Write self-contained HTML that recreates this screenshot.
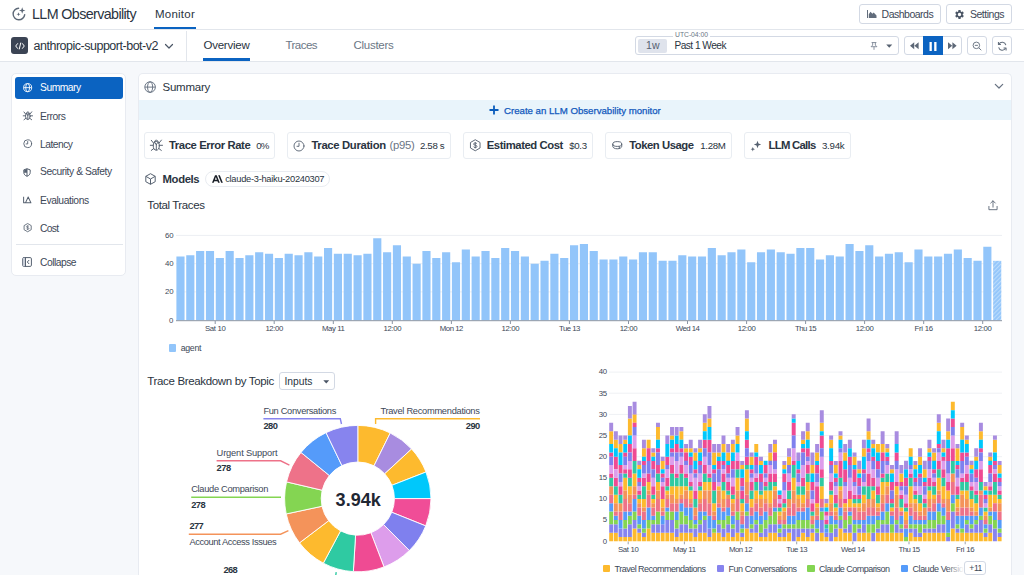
<!DOCTYPE html>
<html><head><meta charset="utf-8"><title>LLM Observability</title>
<style>
html,body{margin:0;padding:0;overflow:hidden;}
html{width:1024px;height:575px;}
body{width:1024px;height:575px;overflow:hidden;background:#f6f8fb;font-family:"Liberation Sans",sans-serif;position:relative;}
.t{position:absolute;white-space:nowrap;}
.b{position:absolute;}
svg{display:block;overflow:visible;}
#root{position:absolute;left:0;top:0;width:1024px;height:575px;overflow:hidden;}
</style></head><body><div id="root">
<div class="b" style="left:0.00px;top:0.00px;width:1024.00px;height:29.00px;background:#fff;border-bottom:1px solid #e2e6ec;"></div>
<div class="b" style="left:0.00px;top:30.00px;width:1024.00px;height:31.00px;background:#fff;border-bottom:1px solid #e2e6ec;"></div>
<svg class="b" style="left:11px;top:6px" width="16" height="16" viewBox="0 0 16 16" fill="none" stroke="#5d6877" stroke-width="1.4" stroke-linecap="round"><path d="M7.600 2.200A5.800 5.800 0 1 0 13.700 8.600"/><path d="M11.200 1.300l.85 2.350 2.350.85-2.350.85-.85 2.350-.85-2.350-2.350-.85 2.350-.85z" fill="#5d6877" stroke="none"/><path d="M7.500 6.200l.55 1.450 1.450.55-1.450.55-.55 1.450-.55-1.450-1.450-.55 1.450-.55z" fill="#5d6877" stroke="none"/></svg>
<div class="t" style="left:32.00px;top:4.00px;font-size:14.3px;line-height:20px;color:#2a3441;letter-spacing:-0.614px;">LLM Observability</div>
<div class="t" style="left:155.00px;top:6.00px;font-size:11.5px;line-height:16px;color:#2a3441;letter-spacing:0.236px;">Monitor</div>
<div class="b" style="left:154.00px;top:26.50px;width:41.50px;height:2.70px;background:#0b63c1;"></div>
<div class="b" style="left:859.00px;top:4.00px;width:82.00px;height:20.00px;border:1px solid #d3d9e4;border-radius:3px;background:#fff;box-sizing:border-box;"></div>
<svg class="b" style="left:866.800px;top:10.300px" width="10" height="8" viewBox="0 0 10 8"><path d="M0.500 0v8" fill="none" stroke="#626d7c" stroke-width="1"/><path d="M1.800 8V4.200l1.700-2.400 1.900 2 1.300-1.300 2.800 2.900V8z" fill="#626d7c"/></svg>
<div class="t" style="left:881.60px;top:6.80px;font-size:10.5px;line-height:15px;color:#3d4858;letter-spacing:-0.502px;">Dashboards</div>
<div class="b" style="left:946.00px;top:4.00px;width:66.00px;height:20.00px;border:1px solid #d3d9e4;border-radius:3px;background:#fff;box-sizing:border-box;"></div>
<svg class="b" style="left:954px;top:8.5px" width="11" height="11" viewBox="0 0 24 24"><path fill="#4a5565" d="M19.14 12.94c.04-.3.06-.61.06-.94 0-.32-.02-.64-.07-.94l2.03-1.58a.49.49 0 0 0 .12-.61l-1.92-3.32a.488.488 0 0 0-.59-.22l-2.39.96c-.5-.38-1.03-.7-1.62-.94l-.36-2.54a.484.484 0 0 0-.48-.41h-3.84c-.24 0-.43.17-.47.41l-.36 2.54c-.59.24-1.13.57-1.62.94l-2.39-.96c-.22-.08-.47 0-.59.22L2.74 8.87c-.12.21-.08.47.12.61l2.03 1.58c-.05.3-.09.63-.09.94s.02.64.07.94l-2.03 1.58a.49.49 0 0 0-.12.61l1.92 3.32c.12.22.37.29.59.22l2.39-.96c.5.38 1.03.7 1.62.94l.36 2.54c.05.24.24.41.48.41h3.84c.24 0 .44-.17.47-.41l.36-2.54c.59-.24 1.13-.56 1.62-.94l2.39.96c.22.08.47 0 .59-.22l1.92-3.32c.12-.22.07-.47-.12-.61l-2.01-1.58zM12 15.6c-1.98 0-3.600-1.62-3.600-3.600s1.62-3.600 3.600-3.600 3.600 1.62 3.600 3.600-1.62 3.600-3.600 3.600z"/></svg>
<div class="t" style="left:970.00px;top:6.80px;font-size:10.5px;line-height:15px;color:#3d4858;letter-spacing:-0.492px;">Settings</div>
<div class="b" style="left:11.00px;top:37.00px;width:17.00px;height:17.00px;background:#3b4454;border-radius:3px;"></div>
<svg class="b" style="left:14.5px;top:41.5px" width="10" height="8" viewBox="0 0 10 8" fill="none" stroke="#fff" stroke-width="1" stroke-linecap="round" stroke-linejoin="round"><path d="M2.6 1.6L.7 4l1.900 2.400M7.400 1.600L9.300 4 7.400 6.400M5.700 1L4.300 7"/></svg>
<div class="t" style="left:33.50px;top:36.50px;font-size:12.5px;line-height:18px;color:#2a3441;letter-spacing:-0.487px;">anthropic-support-bot-v2</div>
<svg class="b" style="left:164px;top:42.5px" width="10" height="7" viewBox="0 0 10 7" fill="none" stroke="#4a5565" stroke-width="1.2" stroke-linecap="round" stroke-linejoin="round"><path d="M1.500 1.500L5 5l3.500-3.500"/></svg>
<div class="b" style="left:186.00px;top:31.00px;width:1.00px;height:30.00px;background:#e2e6ec;"></div>
<div class="t" style="left:203.50px;top:37.00px;font-size:11.5px;line-height:16px;color:#2a3441;letter-spacing:-0.241px;">Overview</div>
<div class="b" style="left:202.50px;top:57.50px;width:47.50px;height:3.00px;background:#0b63c1;"></div>
<div class="t" style="left:285.50px;top:36.90px;font-size:11.5px;line-height:16px;color:#6b7685;letter-spacing:-0.537px;">Traces</div>
<div class="t" style="left:353.50px;top:36.90px;font-size:11.5px;line-height:16px;color:#6b7685;letter-spacing:-0.272px;">Clusters</div>
<div class="b" style="left:635.00px;top:35.60px;width:264.00px;height:19.60px;border:1px solid #d3d9e4;border-radius:3px;background:#fff;box-sizing:border-box;"></div>
<div class="b" style="left:638.00px;top:38.50px;width:29.00px;height:14.00px;background:#dfe3ec;border-radius:2px;"></div>
<div class="t" style="left:646.00px;top:38.20px;font-size:10.5px;line-height:15px;color:#566070;letter-spacing:0.039px;">1w</div>
<div class="t" style="left:674.50px;top:38.60px;font-size:10.1px;line-height:14px;color:#2a3441;letter-spacing:-0.507px;">Past 1 Week</div>
<div class="b" style="left:673.00px;top:31.00px;width:37.00px;height:7.00px;background:#fff;"></div>
<div class="t" style="left:675.00px;top:29.70px;font-size:6.8px;line-height:10px;color:#6b7685;letter-spacing:-0.029px;">UTC-04:00</div>
<svg class="b" style="left:869.600px;top:42px" width="8" height="8" viewBox="0 0 9 9" fill="none" stroke="#7a8494" stroke-width="1"><path d="M1.800 .6h5.400M3 .6v2.900L1.200 5.300h6.600L6 3.500V.6M4.500 5.300V8.800"/></svg>
<svg class="b" style="left:886.300px;top:44.300px" width="6.500" height="4.200" viewBox="0 0 8 5"><path d="M.3.500h7.400L4 4.500z" fill="#566170"/></svg>
<div class="b" style="left:904.00px;top:35.60px;width:57.50px;height:19.60px;border:1px solid #d3d9e4;border-radius:3px;background:#fff;box-sizing:border-box;"></div>
<div class="b" style="left:923.00px;top:35.60px;width:19.50px;height:19.60px;background:#0b63c1;"></div>
<svg class="b" style="left:909.700px;top:42.300px" width="8.800" height="7.400" viewBox="0 0 10 8"><path d="M4.800 0v8L0 4zM9.800 0v8L5 4z" fill="#5d6877"/></svg>
<svg class="b" style="left:929px;top:41.500px" width="8" height="9" viewBox="0 0 8 9"><path d="M0.500 0h2.300v9H.5zM5.200 0h2.300v9H5.200z" fill="#fff"/></svg>
<svg class="b" style="left:947.900px;top:42.300px" width="8.800" height="7.400" viewBox="0 0 10 8"><path d="M0 0v8l4.800-4zM5 0v8l4.800-4z" fill="#5d6877"/></svg>
<div class="b" style="left:967.00px;top:35.60px;width:19.50px;height:19.60px;border:1px solid #d3d9e4;border-radius:3px;background:#fff;box-sizing:border-box;"></div>
<svg class="b" style="left:972.200px;top:40.900px" width="10" height="10" viewBox="0 0 11 11" fill="none" stroke="#626d7c" stroke-width="1"><circle cx="4.800" cy="4.800" r="3.600"/><path d="M3.100 4.800h3.400M7.500 7.500l2.700 2.700"/></svg>
<div class="b" style="left:992.00px;top:35.60px;width:20.00px;height:19.60px;border:1px solid #d3d9e4;border-radius:3px;background:#fff;box-sizing:border-box;"></div>
<svg class="b" style="left:996.800px;top:40.500px" width="10.500" height="10.500" viewBox="0 0 11 11" fill="none" stroke="#626d7c" stroke-width="1.100" stroke-linejoin="round"><path d="M9.300 4.300A4 4 0 0 0 2 3.300M1.700 6.700A4 4 0 0 0 9 7.700"/><path d="M1.500 1v2.600h2.600M9.500 10V7.400H6.900"/></svg>
<div class="b" style="left:11.00px;top:73.00px;width:115.00px;height:203.00px;background:#fff;border:1px solid #e8ebf1;border-radius:5px;box-sizing:border-box;"></div>
<div class="b" style="left:15.00px;top:76.50px;width:108.00px;height:22.00px;background:#0b63c1;border-radius:3px;"></div>
<svg class="b" style="left:22.75px;top:82.65px" width="9.3" height="9.3" viewBox="0 0 12 12" fill="none" stroke="#fff" stroke-width="1.15"><circle cx="6" cy="6" r="5.200"/><ellipse cx="6" cy="6" rx="2.500" ry="5.200"/><path d="M.8 6h10.400"/></svg>
<div class="t" style="left:40.00px;top:81.30px;font-size:10.3px;line-height:14px;color:#fff;letter-spacing:-0.481px;">Summary</div>
<svg class="b" style="left:22.50px;top:111.00px" width="9.80" height="9.05" viewBox="0 0 13 12" fill="none" stroke="#566170" stroke-width="1.25" stroke-linecap="round" stroke-linejoin="round"><ellipse cx="6.400" cy="6.900" rx="3.100" ry="4.400"/><path d="M4.300 3.400C4.300 .4 8.500 .4 8.500 3.400M6.400 5.600v5.600M6.400 5.600L4.900 3.500M6.400 5.600l1.500-2.100M3.700 4.300L1.300 1.300M9.100 4.300l2.500-3.200M3.300 6.400H.3M9.500 6.400h3.200M3.800 9.700l-2.500 1.900M9 9.700l2.500 1.900"/></svg>
<div class="t" style="left:40.00px;top:109.50px;font-size:10.3px;line-height:14px;color:#3d4858;letter-spacing:-0.406px;">Errors</div>
<svg class="b" style="left:22.7px;top:138.7px" width="9.4" height="9.4" viewBox="0 0 12 12" fill="none" stroke="#566170" stroke-width="1.15" stroke-linecap="round"><circle cx="6" cy="6" r="5"/><path d="M6 3.200V6.300H4"/></svg>
<div class="t" style="left:40.00px;top:137.50px;font-size:10.3px;line-height:14px;color:#3d4858;letter-spacing:-0.511px;">Latency</div>
<svg class="b" style="left:23.200px;top:167.600px" width="8" height="9" viewBox="0 0 10 11" fill="none" stroke="#566170" stroke-width="1.250" stroke-linejoin="round"><path d="M5 .8L1 2.200v3.300c0 2.300 1.700 3.900 4 4.700 2.300-.8 4-2.400 4-4.700V2.200z"/><path d="M5 .8v9.400M1 5.200h4" /><path d="M5 1.200L1.500 2.500V5H5z" fill="#566170" stroke="none"/></svg>
<div class="t" style="left:40.00px;top:165.30px;font-size:10.3px;line-height:14px;color:#3d4858;letter-spacing:-0.429px;">Security &amp; Safety</div>
<svg class="b" style="left:23.200px;top:195.800px" width="8.800" height="7.400" viewBox="0 0 10 8.400" fill="none" stroke="#566170" stroke-width="1.150" stroke-linejoin="round"><path d="M.7 .8v6.900h8.800M2.900 7.500L5.900 1.200l3 6.300"/></svg>
<div class="t" style="left:40.00px;top:193.50px;font-size:10.3px;line-height:14px;color:#3d4858;letter-spacing:-0.414px;">Evaluations</div>
<svg class="b" style="left:22.9px;top:223.2px" width="9.3" height="9.3" viewBox="0 0 12 12" fill="none" stroke="#566170" stroke-width="1.1" stroke-linejoin="round"><path d="M6 .7l4.600 2.650v5.300L6 11.300 1.400 8.650v-5.300z"/><path d="M7.600 4.600c-.3-.6-.9-.8-1.600-.8-.9 0-1.600.4-1.600 1.100 0 1.500 3.300.6 3.300 2.200 0 .7-.7 1.100-1.700 1.100-.8 0-1.500-.3-1.700-.9M6 3v6" stroke-width="0.9"/></svg>
<div class="t" style="left:40.00px;top:221.60px;font-size:10.3px;line-height:14px;color:#3d4858;letter-spacing:-0.670px;">Cost</div>
<div class="b" style="left:16.00px;top:244.00px;width:106.50px;height:1.00px;background:#e2e6ec;"></div>
<svg class="b" style="left:22.300px;top:256.600px" width="10" height="10" viewBox="0 0 10 10" fill="none" stroke="#566170" stroke-width="1" stroke-linejoin="round" stroke-linecap="round"><rect x=".6" y=".6" width="8.800" height="8.800" rx="1.200"/><path d="M.8.800h2.700v8.400H.8z" fill="#c9ced8" stroke="none"/><path d="M3.500 .6v8.800M6.900 3.300L5.300 5l1.600 1.700"/></svg>
<div class="t" style="left:40.00px;top:255.70px;font-size:10.3px;line-height:14px;color:#3d4858;letter-spacing:-0.510px;">Collapse</div>
<div class="b" style="left:138.00px;top:73.00px;width:874.00px;height:502.00px;background:#fff;border:1px solid #e8ebf1;border-bottom:none;border-radius:5px 5px 0 0;box-sizing:border-box;"></div>
<svg class="b" style="left:144.00px;top:80.80px" width="12.2" height="12.2" viewBox="0 0 12 12" fill="none" stroke="#677282" stroke-width="0.95"><circle cx="6" cy="6" r="5.200"/><ellipse cx="6" cy="6" rx="2.500" ry="5.200"/><path d="M.8 6h10.400"/></svg>
<div class="t" style="left:162.50px;top:79.00px;font-size:11.5px;line-height:16px;color:#2a3441;letter-spacing:-0.243px;">Summary</div>
<svg class="b" style="left:994px;top:83px" width="10" height="7" viewBox="0 0 10 7" fill="none" stroke="#677282" stroke-width="1.200" stroke-linecap="round" stroke-linejoin="round"><path d="M1.300 1.300L5 5l3.700-3.700"/></svg>
<div class="b" style="left:139.00px;top:100.30px;width:872.00px;height:19.90px;background:#e9f4fb;"></div>
<svg class="b" style="left:489.3px;top:105.3px" width="10" height="10" viewBox="0 0 10 10"><path d="M5 .5v9M.5 5h9" stroke="#0b5cbc" stroke-width="1.800" fill="none"/></svg>
<div class="t" style="left:504.00px;top:103.90px;font-size:9.7px;line-height:14px;color:#1259bd;letter-spacing:-0.027px;-webkit-text-stroke:0.25px #1259bd;">Create an LLM Observability monitor</div>
<div class="b" style="left:144.00px;top:132.00px;width:131.00px;height:26.50px;border:1px solid #e9edf2;border-radius:3px;background:#fff;box-sizing:border-box;"></div>
<svg class="b" style="left:150.10px;top:139.10px" width="12.80" height="11.82" viewBox="0 0 13 12" fill="none" stroke="#566170" stroke-width="1.0" stroke-linecap="round" stroke-linejoin="round"><ellipse cx="6.400" cy="6.900" rx="3.100" ry="4.400"/><path d="M4.300 3.400C4.300 .4 8.500 .4 8.500 3.400M6.400 5.600v5.600M6.400 5.600L4.900 3.500M6.400 5.600l1.500-2.100M3.700 4.300L1.300 1.300M9.100 4.300l2.500-3.200M3.300 6.400H.3M9.500 6.400h3.200M3.800 9.700l-2.500 1.900M9 9.700l2.500 1.900"/></svg>
<div class="t" style="left:169.00px;top:137.00px;font-size:11.3px;line-height:16px;color:#2a3441;font-weight:700;letter-spacing:-0.415px;">Trace Error Rate</div>
<div class="t" style="left:256.30px;top:138.50px;font-size:9.7px;line-height:14px;color:#2a3441;letter-spacing:-0.910px;">0%</div>
<div class="b" style="left:286.50px;top:132.00px;width:164.00px;height:26.50px;border:1px solid #e9edf2;border-radius:3px;background:#fff;box-sizing:border-box;"></div>
<svg class="b" style="left:293.0px;top:139.5px" width="12" height="12" viewBox="0 0 12 12" fill="none" stroke="#566170" stroke-width="0.9" stroke-linecap="round"><circle cx="6" cy="6" r="5"/><path d="M6 3.200V6.300H4"/></svg>
<div class="t" style="left:311.40px;top:137.00px;font-size:11.3px;line-height:16px;color:#2a3441;font-weight:700;letter-spacing:-0.337px;">Trace Duration</div>
<div class="t" style="left:389.50px;top:137.20px;font-size:11.3px;line-height:16px;color:#6b7685;letter-spacing:-0.276px;">(p95)</div>
<div class="t" style="left:420.00px;top:138.50px;font-size:9.7px;line-height:14px;color:#2a3441;letter-spacing:-0.354px;">2.58 s</div>
<div class="b" style="left:462.50px;top:132.00px;width:130.50px;height:26.50px;border:1px solid #e9edf2;border-radius:3px;background:#fff;box-sizing:border-box;"></div>
<svg class="b" style="left:468.5px;top:139.3px" width="12.5" height="12.5" viewBox="0 0 12 12" fill="none" stroke="#566170" stroke-width="0.9" stroke-linejoin="round"><path d="M6 .7l4.600 2.650v5.300L6 11.300 1.400 8.650v-5.300z"/><path d="M7.600 4.600c-.3-.6-.9-.8-1.600-.8-.9 0-1.600.4-1.600 1.100 0 1.500 3.300.6 3.300 2.200 0 .7-.7 1.100-1.700 1.100-.8 0-1.500-.3-1.700-.9M6 3v6" stroke-width="0.9"/></svg>
<div class="t" style="left:486.70px;top:137.00px;font-size:11.3px;line-height:16px;color:#2a3441;font-weight:700;letter-spacing:-0.433px;">Estimated Cost</div>
<div class="t" style="left:569.30px;top:138.50px;font-size:9.7px;line-height:14px;color:#2a3441;letter-spacing:-0.370px;">$0.3</div>
<div class="b" style="left:604.50px;top:132.00px;width:127.50px;height:26.50px;border:1px solid #e9edf2;border-radius:3px;background:#fff;box-sizing:border-box;"></div>
<svg class="b" style="left:612.200px;top:141.200px" width="10.500" height="8.500" viewBox="0 0 10.500 8.500" fill="none" stroke="#566170" stroke-width="0.950"><ellipse cx="5.250" cy="3" rx="4.500" ry="2.400"/><path d="M.75 3v2.300c0 1.400 2 2.500 4.500 2.500s4.500-1.100 4.500-2.500V3M7.300 5.200v2.200"/></svg>
<div class="t" style="left:629.20px;top:137.00px;font-size:11.3px;line-height:16px;color:#2a3441;font-weight:700;letter-spacing:-0.463px;">Token Usage</div>
<div class="t" style="left:700.30px;top:138.50px;font-size:9.7px;line-height:14px;color:#2a3441;letter-spacing:-0.332px;">1.28M</div>
<div class="b" style="left:743.50px;top:132.00px;width:107.50px;height:26.50px;border:1px solid #e9edf2;border-radius:3px;background:#fff;box-sizing:border-box;"></div>
<svg class="b" style="left:750px;top:139.500px" width="12" height="12" viewBox="0 0 12 12" fill="#566170"><path d="M7.500 .8l1 2.700 2.700 1-2.700 1-1 2.700-1-2.700-2.700-1 2.700-1z"/><path d="M2.800 7l.6 1.600 1.600.6-1.600.6-.6 1.600-.6-1.600-1.600-.6 1.600-.6z"/></svg>
<div class="t" style="left:768.60px;top:137.00px;font-size:11.3px;line-height:16px;color:#2a3441;font-weight:700;letter-spacing:-0.718px;">LLM Calls</div>
<div class="t" style="left:821.90px;top:138.50px;font-size:9.7px;line-height:14px;color:#2a3441;letter-spacing:-0.226px;">3.94k</div>
<svg class="b" style="left:144.500px;top:172.500px" width="11" height="12" viewBox="0 0 11 12" fill="none" stroke="#566170" stroke-width="1" stroke-linejoin="round"><path d="M5.500 .7l4.700 2.600v5.400L5.500 11.300.8 8.700V3.300z"/><path d="M.8 3.300l4.700 2.700 4.700-2.700M5.500 6v5.300"/></svg>
<div class="t" style="left:162.60px;top:170.60px;font-size:11.3px;line-height:16px;color:#2a3441;font-weight:700;letter-spacing:-0.388px;">Models</div>
<div class="b" style="left:205.00px;top:170.50px;width:125.00px;height:16.00px;border:1px solid #e9ecf1;border-radius:8px;background:#fff;box-sizing:border-box;"></div>
<svg class="b" style="left:211.500px;top:174.500px" width="11" height="8" viewBox="0 0 46 32"><path fill="#1a1f27" d="M32.730 0h-6.945L38.450 32h6.945L32.730 0ZM12.665 0 0 32h7.082l2.590-6.720h13.250l2.590 6.720h7.082L19.929 0h-7.264Zm-.702 19.337 4.334-11.246 4.334 11.246h-8.668Z"/></svg>
<div class="t" style="left:225.20px;top:172.50px;font-size:9.3px;line-height:13px;color:#2a3441;letter-spacing:-0.277px;">claude-3-haiku-20240307</div>
<div class="t" style="left:147.30px;top:197.10px;font-size:11.5px;line-height:16px;color:#2a3441;letter-spacing:-0.400px;">Total Traces</div>
<svg class="b" style="left:988px;top:200.200px" width="10" height="11" viewBox="0 0 11 12" fill="none" stroke="#5d6877" stroke-width="1" stroke-linecap="round" stroke-linejoin="round"><path d="M5.500 7.800V1M3 3.300L5.500.8 8 3.300M1 7v3.600h9V7"/></svg>
<svg class="b" style="left:0;top:0" width="1024" height="575" viewBox="0 0 1024 575"><defs><pattern id="hat" width="3" height="3" patternUnits="userSpaceOnUse" patternTransform="rotate(45)"><rect width="3" height="3" fill="#92c5fa"/><rect width="1.2" height="3" fill="#b9dbfc"/></pattern></defs><path d="M176 235.4H1002" stroke="#eceff3" stroke-width="1"/><path d="M176 263.7H1002" stroke="#eceff3" stroke-width="1"/><path d="M176 291.9H1002" stroke="#eceff3" stroke-width="1"/><path d="M176.40 320.20h8.15v-63.60h-8.15zM186.24 320.20h8.15v-65.01h-8.15zM196.08 320.20h8.15v-69.25h-8.15zM205.92 320.20h8.15v-69.25h-8.15zM215.76 320.20h8.15v-62.19h-8.15zM225.60 320.20h8.15v-69.25h-8.15zM235.44 320.20h8.15v-62.19h-8.15zM245.28 320.20h8.15v-65.01h-8.15zM255.12 320.20h8.15v-67.84h-8.15zM264.96 320.20h8.15v-66.43h-8.15zM274.80 320.20h8.15v-62.19h-8.15zM284.64 320.20h8.15v-66.43h-8.15zM294.48 320.20h8.15v-65.01h-8.15zM304.32 320.20h8.15v-67.84h-8.15zM314.16 320.20h8.15v-63.60h-8.15zM324.00 320.20h8.15v-72.08h-8.15zM333.84 320.20h8.15v-66.43h-8.15zM343.68 320.20h8.15v-66.43h-8.15zM353.52 320.20h8.15v-65.01h-8.15zM363.36 320.20h8.15v-66.43h-8.15zM373.20 320.20h8.15v-81.97h-8.15zM383.04 320.20h8.15v-67.84h-8.15zM392.88 320.20h8.15v-74.91h-8.15zM402.72 320.20h8.15v-63.60h-8.15zM412.56 320.20h8.15v-56.53h-8.15zM422.40 320.20h8.15v-69.25h-8.15zM432.24 320.20h8.15v-62.19h-8.15zM442.08 320.20h8.15v-67.84h-8.15zM451.92 320.20h8.15v-57.95h-8.15zM461.76 320.20h8.15v-70.67h-8.15zM471.60 320.20h8.15v-63.60h-8.15zM481.44 320.20h8.15v-69.25h-8.15zM491.28 320.20h8.15v-62.19h-8.15zM501.12 320.20h8.15v-72.08h-8.15zM510.96 320.20h8.15v-69.25h-8.15zM520.80 320.20h8.15v-63.60h-8.15zM530.64 320.20h8.15v-56.53h-8.15zM540.48 320.20h8.15v-59.36h-8.15zM550.32 320.20h8.15v-66.43h-8.15zM560.16 320.20h8.15v-62.19h-8.15zM570.00 320.20h8.15v-74.91h-8.15zM579.84 320.20h8.15v-76.32h-8.15zM589.68 320.20h8.15v-69.25h-8.15zM599.52 320.20h8.15v-60.77h-8.15zM609.36 320.20h8.15v-60.77h-8.15zM619.20 320.20h8.15v-63.60h-8.15zM629.04 320.20h8.15v-60.77h-8.15zM638.88 320.20h8.15v-67.84h-8.15zM648.72 320.20h8.15v-67.84h-8.15zM658.56 320.20h8.15v-59.36h-8.15zM668.40 320.20h8.15v-59.36h-8.15zM678.24 320.20h8.15v-65.01h-8.15zM688.08 320.20h8.15v-63.60h-8.15zM697.92 320.20h8.15v-63.60h-8.15zM707.76 320.20h8.15v-72.08h-8.15zM717.60 320.20h8.15v-65.01h-8.15zM727.44 320.20h8.15v-67.84h-8.15zM737.28 320.20h8.15v-70.67h-8.15zM747.12 320.20h8.15v-57.95h-8.15zM756.96 320.20h8.15v-67.84h-8.15zM766.80 320.20h8.15v-70.67h-8.15zM776.64 320.20h8.15v-67.84h-8.15zM786.48 320.20h8.15v-66.43h-8.15zM796.32 320.20h8.15v-72.08h-8.15zM806.16 320.20h8.15v-72.08h-8.15zM816.00 320.20h8.15v-60.77h-8.15zM825.84 320.20h8.15v-65.01h-8.15zM835.68 320.20h8.15v-63.60h-8.15zM845.52 320.20h8.15v-76.32h-8.15zM855.36 320.20h8.15v-69.25h-8.15zM865.20 320.20h8.15v-74.91h-8.15zM875.04 320.20h8.15v-63.60h-8.15zM884.88 320.20h8.15v-66.43h-8.15zM894.72 320.20h8.15v-67.84h-8.15zM904.56 320.20h8.15v-57.95h-8.15zM914.40 320.20h8.15v-70.67h-8.15zM924.24 320.20h8.15v-63.60h-8.15zM934.08 320.20h8.15v-63.60h-8.15zM943.92 320.20h8.15v-66.43h-8.15zM953.76 320.20h8.15v-70.67h-8.15zM963.60 320.20h8.15v-62.19h-8.15zM973.44 320.20h8.15v-59.36h-8.15zM983.28 320.20h8.15v-73.49h-8.15z" fill="#92c5fa"/><rect x="993.12" y="260.84" width="8.15" height="59.36" fill="url(#hat)"/><path d="M176 320.700H1002" stroke="#8a94a3" stroke-width="1"/><path d="M215.2 321v3" stroke="#8a94a3" stroke-width="1"/><path d="M274.2 321v3" stroke="#8a94a3" stroke-width="1"/><path d="M333.3 321v3" stroke="#8a94a3" stroke-width="1"/><path d="M392.3 321v3" stroke="#8a94a3" stroke-width="1"/><path d="M451.4 321v3" stroke="#8a94a3" stroke-width="1"/><path d="M510.4 321v3" stroke="#8a94a3" stroke-width="1"/><path d="M569.4 321v3" stroke="#8a94a3" stroke-width="1"/><path d="M628.5 321v3" stroke="#8a94a3" stroke-width="1"/><path d="M687.5 321v3" stroke="#8a94a3" stroke-width="1"/><path d="M746.6 321v3" stroke="#8a94a3" stroke-width="1"/><path d="M805.6 321v3" stroke="#8a94a3" stroke-width="1"/><path d="M864.6 321v3" stroke="#8a94a3" stroke-width="1"/><path d="M923.7 321v3" stroke="#8a94a3" stroke-width="1"/><path d="M982.7 321v3" stroke="#8a94a3" stroke-width="1"/></svg>
<div class="t" style="left:205.05px;top:323.10px;font-size:7.8px;line-height:11px;color:#3d4858;letter-spacing:-0.375px;">Sat 10</div>
<div class="t" style="left:265.39px;top:323.10px;font-size:7.8px;line-height:11px;color:#3d4858;letter-spacing:-0.364px;">12:00</div>
<div class="t" style="left:322.03px;top:323.10px;font-size:7.8px;line-height:11px;color:#3d4858;letter-spacing:-0.417px;">May 11</div>
<div class="t" style="left:383.47px;top:323.10px;font-size:7.8px;line-height:11px;color:#3d4858;letter-spacing:-0.364px;">12:00</div>
<div class="t" style="left:439.76px;top:323.10px;font-size:7.8px;line-height:11px;color:#3d4858;letter-spacing:-0.470px;">Mon 12</div>
<div class="t" style="left:501.55px;top:323.10px;font-size:7.8px;line-height:11px;color:#3d4858;letter-spacing:-0.364px;">12:00</div>
<div class="t" style="left:559.04px;top:323.10px;font-size:7.8px;line-height:11px;color:#3d4858;letter-spacing:-0.533px;">Tue 13</div>
<div class="t" style="left:619.63px;top:323.10px;font-size:7.8px;line-height:11px;color:#3d4858;letter-spacing:-0.364px;">12:00</div>
<div class="t" style="left:675.77px;top:323.10px;font-size:7.8px;line-height:11px;color:#3d4858;letter-spacing:-0.540px;">Wed 14</div>
<div class="t" style="left:737.71px;top:323.10px;font-size:7.8px;line-height:11px;color:#3d4858;letter-spacing:-0.364px;">12:00</div>
<div class="t" style="left:795.00px;top:323.10px;font-size:7.8px;line-height:11px;color:#3d4858;letter-spacing:-0.514px;">Thu 15</div>
<div class="t" style="left:855.79px;top:323.10px;font-size:7.8px;line-height:11px;color:#3d4858;letter-spacing:-0.364px;">12:00</div>
<div class="t" style="left:914.53px;top:323.10px;font-size:7.8px;line-height:11px;color:#3d4858;letter-spacing:-0.273px;">Fri 16</div>
<div class="t" style="left:973.87px;top:323.10px;font-size:7.8px;line-height:11px;color:#3d4858;letter-spacing:-0.364px;">12:00</div>
<div class="t" style="left:165.00px;top:229.70px;font-size:7.8px;line-height:11px;color:#3d4858;letter-spacing:-0.188px;">60</div>
<div class="t" style="left:165.00px;top:258.00px;font-size:7.8px;line-height:11px;color:#3d4858;letter-spacing:-0.188px;">40</div>
<div class="t" style="left:165.00px;top:286.20px;font-size:7.8px;line-height:11px;color:#3d4858;letter-spacing:-0.188px;">20</div>
<div class="t" style="left:169.10px;top:314.50px;font-size:7.8px;line-height:11px;color:#3d4858;letter-spacing:-0.138px;">0</div>
<div class="b" style="left:168.60px;top:344.00px;width:7.60px;height:7.60px;background:#92c5fa;border-radius:1px;"></div>
<div class="t" style="left:180.70px;top:341.60px;font-size:8.8px;line-height:12px;color:#3d4858;letter-spacing:-0.305px;">agent</div>
<div class="t" style="left:147.30px;top:373.00px;font-size:11.5px;line-height:16px;color:#2a3441;letter-spacing:-0.341px;">Trace Breakdown by Topic</div>
<div class="b" style="left:279.00px;top:371.60px;width:56.00px;height:18.90px;border:1px solid #d3d9e4;border-radius:3px;background:#fff;box-sizing:border-box;"></div>
<div class="t" style="left:284.50px;top:374.80px;font-size:10.3px;line-height:14px;color:#2a3441;letter-spacing:-0.010px;">Inputs</div>
<svg class="b" style="left:322.800px;top:380px" width="6.500" height="4.100" viewBox="0 0 8 5"><path d="M.4.400h7.200L4 4.400z" fill="#4a5565"/></svg>
<svg class="b" style="left:0;top:0" width="1024" height="575" viewBox="0 0 1024 575"><path d="M357.80 425.40A73.20 73.20 0 0 1 390.23 432.98L374.02 465.79A36.60 36.60 0 0 0 357.80 462.00Z" fill="#fdba2e" stroke="#fff" stroke-width="0.9"/><path d="M390.23 432.98A73.20 73.20 0 0 1 411.60 448.96L384.70 473.78A36.60 36.60 0 0 0 374.02 465.79Z" fill="#a88ce0" stroke="#fff" stroke-width="0.9"/><path d="M411.60 448.96A73.20 73.20 0 0 1 426.00 472.01L391.90 485.31A36.60 36.60 0 0 0 384.70 473.78Z" fill="#fdba2e" stroke="#fff" stroke-width="0.9"/><path d="M426.00 472.01A73.20 73.20 0 0 1 431.00 498.60L394.40 498.60A36.60 36.60 0 0 0 391.90 485.31Z" fill="#00c8fb" stroke="#fff" stroke-width="0.9"/><path d="M431.00 498.60A73.20 73.20 0 0 1 425.72 525.90L391.76 512.25A36.60 36.60 0 0 0 394.40 498.60Z" fill="#f04d97" stroke="#fff" stroke-width="0.9"/><path d="M425.72 525.90A73.20 73.20 0 0 1 409.38 550.54L383.59 524.57A36.60 36.60 0 0 0 391.76 512.25Z" fill="#7f80ee" stroke="#fff" stroke-width="0.9"/><path d="M409.38 550.54A73.20 73.20 0 0 1 384.03 566.94L370.92 532.77A36.60 36.60 0 0 0 383.59 524.57Z" fill="#dd9deb" stroke="#fff" stroke-width="0.9"/><path d="M384.03 566.94A73.20 73.20 0 0 1 353.33 571.66L355.57 535.13A36.60 36.60 0 0 0 370.92 532.77Z" fill="#ef4b93" stroke="#fff" stroke-width="0.9"/><path d="M353.33 571.66A73.20 73.20 0 0 1 323.32 563.17L340.56 530.89A36.60 36.60 0 0 0 355.57 535.13Z" fill="#2fcaa2" stroke="#fff" stroke-width="0.9"/><path d="M323.32 563.17A73.20 73.20 0 0 1 299.49 542.86L328.65 520.73A36.60 36.60 0 0 0 340.56 530.89Z" fill="#fdba2e" stroke="#fff" stroke-width="0.9"/><path d="M299.49 542.86A73.20 73.20 0 0 1 286.23 513.94L322.01 506.27A36.60 36.60 0 0 0 328.65 520.73Z" fill="#f4935a" stroke="#fff" stroke-width="0.9"/><path d="M286.23 513.94A73.20 73.20 0 0 1 286.53 481.88L322.17 490.24A36.60 36.60 0 0 0 322.01 506.27Z" fill="#84d552" stroke="#fff" stroke-width="0.9"/><path d="M286.53 481.88A73.20 73.20 0 0 1 300.99 452.43L329.40 475.52A36.60 36.60 0 0 0 322.17 490.24Z" fill="#ee7289" stroke="#fff" stroke-width="0.9"/><path d="M300.99 452.43A73.20 73.20 0 0 1 326.06 432.64L341.93 465.62A36.60 36.60 0 0 0 329.40 475.52Z" fill="#559bfa" stroke="#fff" stroke-width="0.9"/><path d="M326.06 432.64A73.20 73.20 0 0 1 357.80 425.40L357.80 462.00A36.60 36.60 0 0 0 341.93 465.62Z" fill="#8784ee" stroke="#fff" stroke-width="0.9"/><path d="M263.4 418.8 L340.3 418.8 L341.5 424.0" fill="none" stroke="#8784ee" stroke-width="1.400"/><path d="M375.6 424.0 L375.6 418.8 L480.0 418.8" fill="none" stroke="#fdba2e" stroke-width="1.400"/><path d="M216.6 460.8 L280.6 460.8 L289.4 465.2" fill="none" stroke="#ee7289" stroke-width="1.400"/><path d="M191.2 497.3 L281.0 497.3" fill="none" stroke="#84d552" stroke-width="1.400"/><path d="M188.8 534.2 L280.6 534.2 L288.4 530.6" fill="none" stroke="#f4935a" stroke-width="1.400"/><path d="M336.2 572.2 L335.8 575.0" fill="none" stroke="#2fcaa2" stroke-width="1.400"/></svg>
<div class="t" style="left:263.40px;top:404.80px;font-size:9.3px;line-height:13px;color:#3d4858;letter-spacing:-0.321px;">Fun Conversations</div>
<div class="t" style="left:263.40px;top:420.30px;font-size:9.3px;line-height:13px;color:#2a3441;font-weight:700;letter-spacing:-0.472px;">280</div>
<div class="t" style="left:380.40px;top:404.70px;font-size:9.3px;line-height:13px;color:#3d4858;letter-spacing:-0.291px;">Travel Recommendations</div>
<div class="t" style="left:465.70px;top:420.30px;font-size:9.3px;line-height:13px;color:#2a3441;font-weight:700;letter-spacing:-0.472px;">290</div>
<div class="t" style="left:216.60px;top:446.80px;font-size:9.3px;line-height:13px;color:#3d4858;letter-spacing:-0.155px;">Urgent Support</div>
<div class="t" style="left:216.60px;top:462.10px;font-size:9.3px;line-height:13px;color:#2a3441;font-weight:700;letter-spacing:-0.505px;">278</div>
<div class="t" style="left:191.20px;top:483.40px;font-size:9.3px;line-height:13px;color:#3d4858;letter-spacing:-0.311px;">Claude Comparison</div>
<div class="t" style="left:191.20px;top:498.70px;font-size:9.3px;line-height:13px;color:#2a3441;font-weight:700;letter-spacing:-0.505px;">278</div>
<div class="t" style="left:189.40px;top:519.90px;font-size:9.3px;line-height:13px;color:#2a3441;font-weight:700;letter-spacing:-0.572px;">277</div>
<div class="t" style="left:189.40px;top:535.60px;font-size:9.3px;line-height:13px;color:#3d4858;letter-spacing:-0.391px;">Account Access Issues</div>
<div class="t" style="left:223.40px;top:563.50px;font-size:9.3px;line-height:13px;color:#2a3441;font-weight:700;letter-spacing:-0.672px;">268</div>
<div class="t" style="left:335.60px;top:487.50px;font-size:18px;line-height:25px;color:#1f2733;font-weight:700;letter-spacing:0.031px;">3.94k</div>
<svg class="b" style="left:0;top:0" width="1024" height="575" viewBox="0 0 1024 575"><path d="M609 520.1H1002" stroke="#eff1f4" stroke-width="1"/><path d="M609 498.9H1002" stroke="#eff1f4" stroke-width="1"/><path d="M609 477.8H1002" stroke="#eff1f4" stroke-width="1"/><path d="M609 456.7H1002" stroke="#eff1f4" stroke-width="1"/><path d="M609 435.5H1002" stroke="#eff1f4" stroke-width="1"/><path d="M609 414.4H1002" stroke="#eff1f4" stroke-width="1"/><path d="M609 393.2H1002" stroke="#eff1f4" stroke-width="1"/><path d="M609 372.1H1002" stroke="#eff1f4" stroke-width="1"/><path d="M609.20 541.20h3.95v-8.46h-3.95zM609.20 443.97h3.95v-12.68h-3.95zM613.88 541.20h3.95v-8.46h-3.95zM613.88 503.15h3.95v-8.46h-3.95zM613.88 448.20h3.95v-8.46h-3.95zM618.56 541.20h3.95v-4.23h-3.95zM618.56 452.42h3.95v-8.46h-3.95zM623.24 541.20h3.95v-4.23h-3.95zM623.24 490.47h3.95v-12.68h-3.95zM623.24 443.97h3.95v-4.23h-3.95zM627.92 541.20h3.95v-4.23h-3.95zM627.92 494.70h3.95v-8.46h-3.95zM627.92 435.51h3.95v-16.91h-3.95zM632.60 541.20h3.95v-12.68h-3.95zM632.60 486.24h3.95v-12.68h-3.95zM632.60 422.83h3.95v-8.46h-3.95zM637.28 541.20h3.95v-8.46h-3.95zM637.28 503.15h3.95v-4.23h-3.95zM637.28 469.33h3.95v-4.23h-3.95zM641.96 541.20h3.95v-4.23h-3.95zM641.96 507.38h3.95v-8.46h-3.95zM641.96 456.65h3.95v-8.46h-3.95zM646.64 541.20h3.95v-12.68h-3.95zM646.64 490.47h3.95v-8.46h-3.95zM646.64 448.19h3.95v-8.46h-3.95zM651.32 541.20h3.95v-8.46h-3.95zM651.32 503.15h3.95v-4.23h-3.95zM651.32 456.65h3.95v-4.23h-3.95zM656.00 541.20h3.95v-8.46h-3.95zM656.00 490.47h3.95v-8.46h-3.95zM656.00 439.74h3.95v-12.68h-3.95zM660.68 541.20h3.95v-8.46h-3.95zM660.68 507.38h3.95v-8.46h-3.95zM660.68 469.33h3.95v-8.46h-3.95zM665.36 541.20h3.95v-8.46h-3.95zM665.36 494.70h3.95v-4.23h-3.95zM670.04 541.20h3.95v-8.46h-3.95zM670.04 494.70h3.95v-8.46h-3.95zM670.04 439.74h3.95v-4.23h-3.95zM674.72 541.20h3.95v-4.23h-3.95zM674.72 498.93h3.95v-12.68h-3.95zM679.40 541.20h3.95v-8.46h-3.95zM679.40 494.70h3.95v-8.46h-3.95zM679.40 439.74h3.95v-8.46h-3.95zM684.08 541.20h3.95v-8.46h-3.95zM684.08 490.47h3.95v-4.23h-3.95zM684.08 452.42h3.95v-4.23h-3.95zM688.76 541.20h3.95v-8.46h-3.95zM688.76 498.92h3.95v-8.46h-3.95zM688.76 452.42h3.95v-4.23h-3.95zM693.44 541.20h3.95v-4.23h-3.95zM693.44 460.88h3.95v-8.46h-3.95zM698.12 541.20h3.95v-8.46h-3.95zM698.12 498.93h3.95v-8.46h-3.95zM698.12 452.42h3.95v-4.23h-3.95zM702.80 541.20h3.95v-8.46h-3.95zM702.80 490.47h3.95v-8.46h-3.95zM702.80 431.29h3.95v-8.46h-3.95zM707.48 541.20h3.95v-4.23h-3.95zM707.48 490.47h3.95v-8.46h-3.95zM707.48 427.06h3.95v-8.46h-3.95zM712.16 541.20h3.95v-8.46h-3.95zM712.16 511.61h3.95v-8.46h-3.95zM712.16 465.11h3.95v-12.68h-3.95zM716.84 541.20h3.95v-8.46h-3.95zM716.84 490.47h3.95v-4.23h-3.95zM716.84 456.65h3.95v-4.23h-3.95zM721.52 541.20h3.95v-4.23h-3.95zM721.52 498.93h3.95v-8.46h-3.95zM721.52 452.42h3.95v-8.46h-3.95zM726.20 541.20h3.95v-8.46h-3.95zM726.20 460.88h3.95v-8.46h-3.95zM730.88 541.20h3.95v-4.23h-3.95zM730.88 503.15h3.95v-4.23h-3.95zM730.88 452.42h3.95v-8.46h-3.95zM735.56 541.20h3.95v-8.46h-3.95zM735.56 490.47h3.95v-12.68h-3.95zM735.56 443.97h3.95v-8.46h-3.95zM740.24 541.20h3.95v-4.23h-3.95zM740.24 511.61h3.95v-8.46h-3.95zM740.24 469.33h3.95v-4.23h-3.95zM744.92 541.20h3.95v-12.68h-3.95zM744.92 482.02h3.95v-12.68h-3.95zM744.92 431.29h3.95v-12.68h-3.95zM749.60 541.20h3.95v-8.46h-3.95zM749.60 507.38h3.95v-8.46h-3.95zM749.60 465.11h3.95v-8.46h-3.95zM754.28 541.20h3.95v-8.46h-3.95zM754.28 498.93h3.95v-8.46h-3.95zM754.28 452.42h3.95v-8.46h-3.95zM758.96 541.20h3.95v-4.23h-3.95zM758.96 498.93h3.95v-4.23h-3.95zM758.96 465.11h3.95v-4.23h-3.95zM763.64 541.20h3.95v-4.23h-3.95zM763.64 498.93h3.95v-8.46h-3.95zM768.32 541.20h3.95v-8.46h-3.95zM768.32 503.15h3.95v-12.68h-3.95zM768.32 460.88h3.95v-8.46h-3.95zM773.00 541.20h3.95v-8.46h-3.95zM773.00 490.47h3.95v-4.23h-3.95zM773.00 452.42h3.95v-8.46h-3.95zM777.68 541.20h3.95v-4.23h-3.95zM777.68 515.84h3.95v-4.23h-3.95zM782.36 541.20h3.95v-4.23h-3.95zM782.36 511.61h3.95v-4.23h-3.95zM782.36 469.33h3.95v-4.23h-3.95zM787.04 541.20h3.95v-8.46h-3.95zM787.04 465.11h3.95v-8.46h-3.95zM791.72 490.47h3.95v-12.68h-3.95zM796.40 541.20h3.95v-4.23h-3.95zM796.40 498.93h3.95v-4.23h-3.95zM801.08 541.20h3.95v-8.46h-3.95zM801.08 503.15h3.95v-8.46h-3.95zM801.08 443.97h3.95v-4.23h-3.95zM805.76 541.20h3.95v-4.23h-3.95zM805.76 490.47h3.95v-8.46h-3.95zM805.76 439.74h3.95v-8.46h-3.95zM810.44 541.20h3.95v-8.46h-3.95zM810.44 473.56h3.95v-8.46h-3.95zM815.12 507.38h3.95v-4.23h-3.95zM815.12 460.88h3.95v-8.46h-3.95zM819.80 541.20h3.95v-8.46h-3.95zM819.80 498.93h3.95v-12.68h-3.95zM819.80 431.29h3.95v-8.46h-3.95zM824.48 541.20h3.95v-4.23h-3.95zM824.48 507.38h3.95v-4.23h-3.95zM829.16 503.15h3.95v-8.46h-3.95zM829.16 448.19h3.95v-8.46h-3.95zM833.84 541.20h3.95v-4.23h-3.95zM833.84 511.61h3.95v-4.23h-3.95zM833.84 473.56h3.95v-8.46h-3.95zM838.52 541.20h3.95v-12.68h-3.95zM838.52 490.47h3.95v-4.23h-3.95zM838.52 439.74h3.95v-4.23h-3.95zM843.20 541.20h3.95v-8.46h-3.95zM843.20 507.38h3.95v-4.23h-3.95zM843.20 460.88h3.95v-8.46h-3.95zM847.88 541.20h3.95v-8.46h-3.95zM847.88 507.38h3.95v-8.46h-3.95zM852.56 507.38h3.95v-4.23h-3.95zM852.56 465.10h3.95v-8.46h-3.95zM857.24 541.20h3.95v-8.46h-3.95zM857.24 507.38h3.95v-4.23h-3.95zM857.24 473.56h3.95v-4.23h-3.95zM861.92 541.20h3.95v-8.46h-3.95zM861.92 503.15h3.95v-8.46h-3.95zM861.92 456.65h3.95v-8.46h-3.95zM866.60 541.20h3.95v-8.46h-3.95zM866.60 439.74h3.95v-8.46h-3.95zM871.28 498.92h3.95v-8.46h-3.95zM871.28 448.19h3.95v-4.23h-3.95zM875.96 541.20h3.95v-8.46h-3.95zM875.96 507.38h3.95v-4.23h-3.95zM875.96 452.42h3.95v-8.46h-3.95zM880.64 541.20h3.95v-8.46h-3.95zM880.64 494.70h3.95v-12.68h-3.95zM880.64 452.42h3.95v-8.46h-3.95zM885.32 541.20h3.95v-8.46h-3.95zM885.32 486.24h3.95v-4.23h-3.95zM885.32 452.42h3.95v-4.23h-3.95zM890.00 541.20h3.95v-8.46h-3.95zM890.00 511.61h3.95v-4.23h-3.95zM890.00 473.56h3.95v-4.23h-3.95zM894.68 541.20h3.95v-8.46h-3.95zM894.68 494.70h3.95v-8.46h-3.95zM899.36 541.20h3.95v-8.46h-3.95zM899.36 511.61h3.95v-4.23h-3.95zM899.36 482.01h3.95v-8.46h-3.95zM904.04 520.06h3.95v-8.46h-3.95zM908.72 541.20h3.95v-8.46h-3.95zM908.72 503.15h3.95v-16.91h-3.95zM908.72 456.65h3.95v-8.46h-3.95zM913.40 541.20h3.95v-4.23h-3.95zM913.40 503.15h3.95v-4.23h-3.95zM913.40 469.33h3.95v-4.23h-3.95zM918.08 541.20h3.95v-4.23h-3.95zM918.08 511.61h3.95v-8.46h-3.95zM918.08 465.11h3.95v-8.46h-3.95zM922.76 541.20h3.95v-8.46h-3.95zM922.76 477.79h3.95v-8.46h-3.95zM927.44 541.20h3.95v-8.46h-3.95zM927.44 498.93h3.95v-8.46h-3.95zM927.44 452.42h3.95v-4.23h-3.95zM932.12 541.20h3.95v-8.46h-3.95zM932.12 498.93h3.95v-4.23h-3.95zM932.12 460.88h3.95v-8.46h-3.95zM936.80 541.20h3.95v-8.46h-3.95zM936.80 490.47h3.95v-12.68h-3.95zM936.80 431.28h3.95v-8.46h-3.95zM941.48 541.20h3.95v-8.46h-3.95zM941.48 498.92h3.95v-12.68h-3.95zM941.48 452.42h3.95v-4.23h-3.95zM946.16 498.93h3.95v-8.46h-3.95zM946.16 439.74h3.95v-8.46h-3.95zM950.84 541.20h3.95v-12.68h-3.95zM950.84 410.15h3.95v-8.46h-3.95zM955.52 541.20h3.95v-8.46h-3.95zM955.52 507.38h3.95v-8.46h-3.95zM955.52 460.88h3.95v-12.68h-3.95zM960.20 541.20h3.95v-8.46h-3.95zM960.20 494.70h3.95v-4.23h-3.95zM960.20 439.74h3.95v-12.68h-3.95zM964.88 541.20h3.95v-8.46h-3.95zM964.88 498.93h3.95v-8.46h-3.95zM964.88 443.97h3.95v-4.23h-3.95zM969.56 541.20h3.95v-8.46h-3.95zM969.56 507.38h3.95v-8.46h-3.95zM969.56 469.33h3.95v-4.23h-3.95zM974.24 541.20h3.95v-8.46h-3.95zM974.24 511.61h3.95v-8.46h-3.95zM974.24 460.88h3.95v-4.23h-3.95zM978.92 541.20h3.95v-8.46h-3.95zM978.92 439.74h3.95v-8.46h-3.95zM983.60 541.20h3.95v-4.23h-3.95zM983.60 515.84h3.95v-4.23h-3.95zM983.60 490.47h3.95v-4.23h-3.95zM988.28 541.20h3.95v-8.46h-3.95zM988.28 507.38h3.95v-12.68h-3.95zM988.28 460.88h3.95v-4.23h-3.95zM992.96 503.15h3.95v-8.46h-3.95zM992.96 452.42h3.95v-12.68h-3.95zM997.64 541.20h3.95v-4.23h-3.95zM997.64 503.15h3.95v-4.23h-3.95zM997.64 473.56h3.95v-8.46h-3.95z" fill="#fdba2e"/><path d="M609.20 532.75h3.95v-8.46h-3.95zM613.88 532.75h3.95v-8.46h-3.95zM618.56 536.97h3.95v-8.46h-3.95zM623.24 536.97h3.95v-8.46h-3.95zM627.92 536.97h3.95v-12.68h-3.95zM632.60 528.52h3.95v-8.46h-3.95zM637.28 532.75h3.95v-4.23h-3.95zM641.96 536.97h3.95v-4.23h-3.95zM651.32 532.75h3.95v-8.46h-3.95zM656.00 532.75h3.95v-8.46h-3.95zM660.68 532.75h3.95v-8.46h-3.95zM665.36 532.75h3.95v-12.68h-3.95zM670.04 532.75h3.95v-12.68h-3.95zM674.72 536.97h3.95v-8.46h-3.95zM679.40 532.75h3.95v-8.46h-3.95zM684.08 532.75h3.95v-8.46h-3.95zM688.76 532.75h3.95v-4.23h-3.95zM693.44 536.97h3.95v-8.46h-3.95zM698.12 532.75h3.95v-8.46h-3.95zM702.80 532.75h3.95v-12.68h-3.95zM707.48 536.97h3.95v-8.46h-3.95zM716.84 532.75h3.95v-8.46h-3.95zM721.52 536.97h3.95v-8.46h-3.95zM726.20 532.75h3.95v-8.46h-3.95zM730.88 536.97h3.95v-8.46h-3.95zM735.56 532.75h3.95v-12.68h-3.95zM740.24 536.97h3.95v-4.23h-3.95zM744.92 528.52h3.95v-12.68h-3.95zM749.60 532.75h3.95v-4.23h-3.95zM754.28 532.75h3.95v-8.46h-3.95zM758.96 536.97h3.95v-4.23h-3.95zM763.64 536.97h3.95v-8.46h-3.95zM768.32 532.75h3.95v-8.46h-3.95zM773.00 532.75h3.95v-8.46h-3.95zM777.68 536.97h3.95v-4.23h-3.95zM782.36 536.97h3.95v-8.46h-3.95zM787.04 532.75h3.95v-4.23h-3.95zM791.72 541.20h3.95v-12.68h-3.95zM796.40 536.97h3.95v-8.46h-3.95zM801.08 532.75h3.95v-4.23h-3.95zM805.76 536.97h3.95v-8.46h-3.95zM810.44 532.75h3.95v-4.23h-3.95zM815.12 541.20h3.95v-8.46h-3.95zM819.80 532.75h3.95v-12.68h-3.95zM824.48 536.97h3.95v-4.23h-3.95zM829.16 541.20h3.95v-8.46h-3.95zM833.84 536.97h3.95v-8.46h-3.95zM838.52 528.52h3.95v-8.46h-3.95zM843.20 532.75h3.95v-4.23h-3.95zM847.88 532.75h3.95v-8.46h-3.95zM852.56 541.20h3.95v-8.46h-3.95zM857.24 532.75h3.95v-4.23h-3.95zM861.92 532.75h3.95v-8.46h-3.95zM871.28 541.20h3.95v-8.46h-3.95zM875.96 532.75h3.95v-4.23h-3.95zM880.64 532.75h3.95v-8.46h-3.95zM885.32 532.75h3.95v-8.46h-3.95zM894.68 532.75h3.95v-8.46h-3.95zM899.36 532.75h3.95v-4.23h-3.95zM908.72 532.75h3.95v-4.23h-3.95zM913.40 536.97h3.95v-8.46h-3.95zM918.08 536.97h3.95v-4.23h-3.95zM922.76 532.75h3.95v-4.23h-3.95zM927.44 532.75h3.95v-4.23h-3.95zM932.12 532.75h3.95v-4.23h-3.95zM936.80 532.75h3.95v-8.46h-3.95zM941.48 532.75h3.95v-8.46h-3.95zM946.16 541.20h3.95v-4.23h-3.95zM950.84 528.52h3.95v-16.91h-3.95zM955.52 532.75h3.95v-4.23h-3.95zM964.88 532.75h3.95v-8.46h-3.95zM969.56 532.75h3.95v-4.23h-3.95zM974.24 532.75h3.95v-8.46h-3.95zM978.92 532.75h3.95v-12.68h-3.95zM983.60 536.97h3.95v-4.23h-3.95zM988.28 532.75h3.95v-8.46h-3.95zM992.96 541.20h3.95v-12.68h-3.95zM997.64 536.97h3.95v-4.23h-3.95z" fill="#8784ee"/><path d="M609.20 524.29h3.95v-12.68h-3.95zM613.88 524.29h3.95v-4.23h-3.95zM623.24 528.52h3.95v-8.46h-3.95zM627.92 524.29h3.95v-8.46h-3.95zM632.60 520.06h3.95v-8.46h-3.95zM637.28 528.52h3.95v-4.23h-3.95zM641.96 532.75h3.95v-4.23h-3.95zM646.64 528.52h3.95v-8.46h-3.95zM651.32 524.29h3.95v-4.23h-3.95zM656.00 524.29h3.95v-12.68h-3.95zM665.36 520.06h3.95v-8.46h-3.95zM670.04 520.06h3.95v-8.46h-3.95zM674.72 528.52h3.95v-8.46h-3.95zM679.40 524.29h3.95v-12.68h-3.95zM684.08 524.29h3.95v-8.46h-3.95zM688.76 528.52h3.95v-8.46h-3.95zM693.44 528.52h3.95v-4.23h-3.95zM698.12 524.29h3.95v-4.23h-3.95zM702.80 520.06h3.95v-4.23h-3.95zM712.16 532.75h3.95v-4.23h-3.95zM716.84 524.29h3.95v-4.23h-3.95zM721.52 528.52h3.95v-8.46h-3.95zM726.20 524.29h3.95v-8.46h-3.95zM730.88 528.52h3.95v-4.23h-3.95zM735.56 520.06h3.95v-8.46h-3.95zM740.24 532.75h3.95v-4.23h-3.95zM744.92 515.84h3.95v-4.23h-3.95zM749.60 528.52h3.95v-4.23h-3.95zM754.28 524.29h3.95v-4.23h-3.95zM758.96 532.75h3.95v-8.46h-3.95zM763.64 528.52h3.95v-8.46h-3.95zM768.32 524.29h3.95v-8.46h-3.95zM773.00 524.29h3.95v-12.68h-3.95zM777.68 532.75h3.95v-4.23h-3.95zM782.36 528.52h3.95v-4.23h-3.95zM787.04 528.52h3.95v-4.23h-3.95zM791.72 528.52h3.95v-4.23h-3.95zM796.40 528.52h3.95v-8.46h-3.95zM801.08 528.52h3.95v-8.46h-3.95zM805.76 528.52h3.95v-8.46h-3.95zM810.44 528.52h3.95v-4.23h-3.95zM815.12 532.75h3.95v-4.23h-3.95zM819.80 520.06h3.95v-8.46h-3.95zM829.16 532.75h3.95v-8.46h-3.95zM833.84 528.52h3.95v-4.23h-3.95zM838.52 520.06h3.95v-4.23h-3.95zM843.20 528.52h3.95v-8.46h-3.95zM847.88 524.29h3.95v-8.46h-3.95zM852.56 532.75h3.95v-8.46h-3.95zM857.24 528.52h3.95v-4.23h-3.95zM866.60 532.75h3.95v-8.46h-3.95zM871.28 532.75h3.95v-8.46h-3.95zM875.96 528.52h3.95v-8.46h-3.95zM880.64 524.29h3.95v-4.23h-3.95zM885.32 524.29h3.95v-12.68h-3.95zM890.00 532.75h3.95v-8.46h-3.95zM894.68 524.29h3.95v-4.23h-3.95zM899.36 528.52h3.95v-4.23h-3.95zM904.04 541.20h3.95v-4.23h-3.95zM908.72 528.52h3.95v-4.23h-3.95zM913.40 528.52h3.95v-4.23h-3.95zM918.08 532.75h3.95v-8.46h-3.95zM922.76 528.52h3.95v-4.23h-3.95zM927.44 528.52h3.95v-8.46h-3.95zM932.12 528.52h3.95v-8.46h-3.95zM936.80 524.29h3.95v-12.68h-3.95zM941.48 524.29h3.95v-8.46h-3.95zM946.16 536.97h3.95v-4.23h-3.95zM950.84 511.61h3.95v-8.46h-3.95zM955.52 528.52h3.95v-4.23h-3.95zM960.20 532.75h3.95v-4.23h-3.95zM964.88 524.29h3.95v-4.23h-3.95zM969.56 528.52h3.95v-4.23h-3.95zM974.24 524.29h3.95v-4.23h-3.95zM978.92 520.06h3.95v-4.23h-3.95zM983.60 532.75h3.95v-4.23h-3.95zM988.28 524.29h3.95v-8.46h-3.95zM992.96 528.52h3.95v-8.46h-3.95zM997.64 532.75h3.95v-4.23h-3.95z" fill="#84d552"/><path d="M609.20 511.61h3.95v-8.46h-3.95zM613.88 520.06h3.95v-4.23h-3.95zM618.56 528.52h3.95v-8.46h-3.95zM623.24 520.06h3.95v-8.46h-3.95zM627.92 515.84h3.95v-4.23h-3.95zM632.60 511.61h3.95v-12.68h-3.95zM637.28 524.29h3.95v-8.46h-3.95zM641.96 528.52h3.95v-8.46h-3.95zM646.64 520.06h3.95v-12.68h-3.95zM651.32 520.06h3.95v-4.23h-3.95zM660.68 524.29h3.95v-8.46h-3.95zM665.36 511.61h3.95v-4.23h-3.95zM674.72 520.06h3.95v-8.46h-3.95zM679.40 511.61h3.95v-8.46h-3.95zM684.08 515.83h3.95v-8.46h-3.95zM688.76 520.06h3.95v-12.68h-3.95zM693.44 524.29h3.95v-4.23h-3.95zM698.12 520.06h3.95v-8.46h-3.95zM702.80 515.84h3.95v-4.23h-3.95zM707.48 528.52h3.95v-12.68h-3.95zM712.16 528.52h3.95v-8.46h-3.95zM716.84 520.06h3.95v-12.68h-3.95zM721.52 520.06h3.95v-8.46h-3.95zM726.20 515.83h3.95v-8.46h-3.95zM730.88 524.29h3.95v-8.46h-3.95zM740.24 528.52h3.95v-4.23h-3.95zM744.92 511.61h3.95v-8.46h-3.95zM749.60 524.29h3.95v-8.46h-3.95zM754.28 520.06h3.95v-8.46h-3.95zM758.96 524.29h3.95v-8.46h-3.95zM763.64 520.06h3.95v-8.46h-3.95zM773.00 511.61h3.95v-4.23h-3.95zM777.68 528.52h3.95v-4.23h-3.95zM787.04 524.29h3.95v-8.46h-3.95zM791.72 524.29h3.95v-8.46h-3.95zM796.40 520.06h3.95v-8.46h-3.95zM801.08 520.06h3.95v-8.46h-3.95zM805.76 520.06h3.95v-12.68h-3.95zM815.12 528.52h3.95v-8.46h-3.95zM819.80 511.61h3.95v-4.23h-3.95zM824.48 532.75h3.95v-4.23h-3.95zM829.16 524.29h3.95v-8.46h-3.95zM833.84 524.29h3.95v-4.23h-3.95zM838.52 515.84h3.95v-8.46h-3.95zM847.88 515.83h3.95v-4.23h-3.95zM852.56 524.29h3.95v-4.23h-3.95zM857.24 524.29h3.95v-4.23h-3.95zM861.92 524.29h3.95v-4.23h-3.95zM866.60 524.29h3.95v-8.46h-3.95zM871.28 524.29h3.95v-8.46h-3.95zM875.96 520.06h3.95v-4.23h-3.95zM880.64 520.06h3.95v-8.46h-3.95zM885.32 511.61h3.95v-8.46h-3.95zM890.00 524.29h3.95v-8.46h-3.95zM899.36 524.29h3.95v-8.46h-3.95zM904.04 536.97h3.95v-8.46h-3.95zM908.72 524.29h3.95v-8.46h-3.95zM913.40 524.29h3.95v-4.23h-3.95zM918.08 524.29h3.95v-4.23h-3.95zM922.76 524.29h3.95v-4.23h-3.95zM927.44 520.06h3.95v-8.46h-3.95zM932.12 520.06h3.95v-8.46h-3.95zM936.80 511.61h3.95v-8.46h-3.95zM941.48 515.83h3.95v-8.46h-3.95zM946.16 532.75h3.95v-12.68h-3.95zM950.84 503.15h3.95v-8.46h-3.95zM955.52 524.29h3.95v-8.46h-3.95zM960.20 528.52h3.95v-12.68h-3.95zM964.88 520.06h3.95v-4.23h-3.95zM969.56 524.29h3.95v-8.46h-3.95zM974.24 520.06h3.95v-4.23h-3.95zM978.92 515.84h3.95v-8.46h-3.95zM983.60 528.52h3.95v-4.23h-3.95zM988.28 515.83h3.95v-4.23h-3.95zM992.96 520.06h3.95v-8.46h-3.95zM997.64 528.52h3.95v-8.46h-3.95z" fill="#559bfa"/><path d="M609.20 503.15h3.95v-8.46h-3.95zM613.88 515.84h3.95v-4.23h-3.95zM618.56 520.06h3.95v-8.46h-3.95zM623.24 511.61h3.95v-12.68h-3.95zM627.92 511.61h3.95v-8.46h-3.95zM632.60 498.93h3.95v-4.23h-3.95zM637.28 515.84h3.95v-8.46h-3.95zM641.96 520.06h3.95v-8.46h-3.95zM646.64 507.38h3.95v-12.68h-3.95zM651.32 515.84h3.95v-8.46h-3.95zM656.00 511.61h3.95v-12.68h-3.95zM660.68 515.83h3.95v-4.23h-3.95zM665.36 507.38h3.95v-8.46h-3.95zM670.04 511.61h3.95v-8.46h-3.95zM674.72 511.61h3.95v-8.46h-3.95zM679.40 503.15h3.95v-4.23h-3.95zM684.08 507.38h3.95v-8.46h-3.95zM688.76 507.38h3.95v-4.23h-3.95zM693.44 520.06h3.95v-4.23h-3.95zM698.12 511.61h3.95v-8.46h-3.95zM702.80 511.61h3.95v-12.68h-3.95zM707.48 515.84h3.95v-12.68h-3.95zM712.16 520.06h3.95v-4.23h-3.95zM716.84 507.38h3.95v-4.23h-3.95zM721.52 511.61h3.95v-4.23h-3.95zM726.20 507.38h3.95v-8.46h-3.95zM730.88 515.84h3.95v-4.23h-3.95zM735.56 511.61h3.95v-12.68h-3.95zM740.24 524.29h3.95v-8.46h-3.95zM744.92 503.15h3.95v-8.46h-3.95zM749.60 515.84h3.95v-8.46h-3.95zM754.28 511.61h3.95v-8.46h-3.95zM758.96 515.84h3.95v-8.46h-3.95zM763.64 511.61h3.95v-8.46h-3.95zM768.32 515.83h3.95v-8.46h-3.95zM773.00 507.38h3.95v-8.46h-3.95zM777.68 524.29h3.95v-4.23h-3.95zM782.36 524.29h3.95v-4.23h-3.95zM787.04 515.84h3.95v-8.46h-3.95zM791.72 515.84h3.95v-12.68h-3.95zM796.40 511.61h3.95v-4.23h-3.95zM801.08 511.61h3.95v-4.23h-3.95zM805.76 507.38h3.95v-8.46h-3.95zM810.44 524.29h3.95v-4.23h-3.95zM815.12 520.06h3.95v-4.23h-3.95zM819.80 507.38h3.95v-8.46h-3.95zM829.16 515.83h3.95v-4.23h-3.95zM833.84 520.06h3.95v-4.23h-3.95zM838.52 507.38h3.95v-8.46h-3.95zM843.20 520.06h3.95v-8.46h-3.95zM847.88 511.61h3.95v-4.23h-3.95zM852.56 520.06h3.95v-12.68h-3.95zM857.24 520.06h3.95v-8.46h-3.95zM861.92 520.06h3.95v-8.46h-3.95zM866.60 515.83h3.95v-8.46h-3.95zM871.28 515.83h3.95v-8.46h-3.95zM875.96 515.84h3.95v-4.23h-3.95zM880.64 511.61h3.95v-8.46h-3.95zM885.32 503.15h3.95v-8.46h-3.95zM890.00 515.83h3.95v-4.23h-3.95zM894.68 520.06h3.95v-12.68h-3.95zM899.36 515.84h3.95v-4.23h-3.95zM904.04 528.52h3.95v-4.23h-3.95zM908.72 515.84h3.95v-8.46h-3.95zM913.40 520.06h3.95v-8.46h-3.95zM918.08 520.06h3.95v-4.23h-3.95zM922.76 520.06h3.95v-4.23h-3.95zM927.44 511.61h3.95v-4.23h-3.95zM932.12 511.61h3.95v-8.46h-3.95zM936.80 503.15h3.95v-8.46h-3.95zM941.48 507.38h3.95v-4.23h-3.95zM946.16 520.06h3.95v-8.46h-3.95zM950.84 494.70h3.95v-12.68h-3.95zM955.52 515.84h3.95v-4.23h-3.95zM960.20 515.84h3.95v-8.46h-3.95zM964.88 515.84h3.95v-8.46h-3.95zM969.56 515.84h3.95v-4.23h-3.95zM978.92 507.38h3.95v-12.68h-3.95zM983.60 524.29h3.95v-4.23h-3.95zM992.96 511.61h3.95v-8.46h-3.95zM997.64 520.06h3.95v-8.46h-3.95z" fill="#ee7289"/><path d="M609.20 494.70h3.95v-8.46h-3.95zM613.88 511.61h3.95v-8.46h-3.95zM618.56 511.61h3.95v-8.46h-3.95zM623.24 498.93h3.95v-8.46h-3.95zM627.92 503.15h3.95v-8.46h-3.95zM632.60 494.70h3.95v-8.46h-3.95zM637.28 507.38h3.95v-4.23h-3.95zM641.96 511.61h3.95v-4.23h-3.95zM646.64 494.70h3.95v-4.23h-3.95zM651.32 507.38h3.95v-4.23h-3.95zM656.00 498.92h3.95v-8.46h-3.95zM660.68 511.61h3.95v-4.23h-3.95zM665.36 498.93h3.95v-4.23h-3.95zM670.04 503.15h3.95v-8.46h-3.95zM674.72 503.15h3.95v-4.23h-3.95zM679.40 498.92h3.95v-4.23h-3.95zM684.08 498.92h3.95v-8.46h-3.95zM688.76 503.15h3.95v-4.23h-3.95zM693.44 515.84h3.95v-8.46h-3.95zM698.12 503.15h3.95v-4.23h-3.95zM702.80 498.93h3.95v-8.46h-3.95zM707.48 503.15h3.95v-12.68h-3.95zM712.16 515.84h3.95v-4.23h-3.95zM716.84 503.15h3.95v-12.68h-3.95zM721.52 507.38h3.95v-8.46h-3.95zM726.20 498.92h3.95v-4.23h-3.95zM730.88 511.61h3.95v-8.46h-3.95zM735.56 498.93h3.95v-8.46h-3.95zM740.24 515.84h3.95v-4.23h-3.95zM744.92 494.70h3.95v-12.68h-3.95zM754.28 503.15h3.95v-4.23h-3.95zM758.96 507.38h3.95v-8.46h-3.95zM763.64 503.15h3.95v-4.23h-3.95zM768.32 507.38h3.95v-4.23h-3.95zM773.00 498.92h3.95v-8.46h-3.95zM777.68 520.06h3.95v-4.23h-3.95zM782.36 520.06h3.95v-8.46h-3.95zM787.04 507.38h3.95v-8.46h-3.95zM791.72 503.15h3.95v-12.68h-3.95zM796.40 507.38h3.95v-8.46h-3.95zM801.08 507.38h3.95v-4.23h-3.95zM805.76 498.93h3.95v-8.46h-3.95zM810.44 520.06h3.95v-4.23h-3.95zM815.12 515.84h3.95v-8.46h-3.95zM829.16 511.61h3.95v-8.46h-3.95zM833.84 515.84h3.95v-4.23h-3.95zM838.52 498.93h3.95v-8.46h-3.95zM843.20 511.61h3.95v-4.23h-3.95zM857.24 511.61h3.95v-4.23h-3.95zM861.92 511.61h3.95v-8.46h-3.95zM866.60 507.38h3.95v-8.46h-3.95zM871.28 507.38h3.95v-8.46h-3.95zM875.96 511.61h3.95v-4.23h-3.95zM880.64 503.15h3.95v-8.46h-3.95zM885.32 494.70h3.95v-8.46h-3.95zM894.68 507.38h3.95v-12.68h-3.95zM904.04 524.29h3.95v-4.23h-3.95zM908.72 507.38h3.95v-4.23h-3.95zM913.40 511.61h3.95v-8.46h-3.95zM918.08 515.84h3.95v-4.23h-3.95zM922.76 515.84h3.95v-8.46h-3.95zM927.44 507.38h3.95v-8.46h-3.95zM932.12 503.15h3.95v-4.23h-3.95zM936.80 494.70h3.95v-4.23h-3.95zM941.48 503.15h3.95v-4.23h-3.95zM946.16 511.61h3.95v-12.68h-3.95zM950.84 482.02h3.95v-8.46h-3.95zM955.52 511.61h3.95v-4.23h-3.95zM960.20 507.38h3.95v-12.68h-3.95zM964.88 507.38h3.95v-8.46h-3.95zM969.56 511.61h3.95v-4.23h-3.95zM974.24 515.84h3.95v-4.23h-3.95zM978.92 494.70h3.95v-4.23h-3.95zM983.60 520.06h3.95v-4.23h-3.95zM988.28 511.61h3.95v-4.23h-3.95zM997.64 511.61h3.95v-8.46h-3.95z" fill="#f4935a"/><path d="M609.20 486.24h3.95v-8.46h-3.95zM613.88 494.70h3.95v-8.46h-3.95zM618.56 503.15h3.95v-8.46h-3.95zM623.24 477.79h3.95v-4.23h-3.95zM627.92 486.24h3.95v-8.46h-3.95zM632.60 473.56h3.95v-12.68h-3.95zM637.28 498.93h3.95v-4.23h-3.95zM641.96 498.93h3.95v-12.68h-3.95zM651.32 498.93h3.95v-4.23h-3.95zM656.00 482.01h3.95v-8.46h-3.95zM665.36 490.47h3.95v-4.23h-3.95zM670.04 486.24h3.95v-12.68h-3.95zM674.72 486.24h3.95v-8.46h-3.95zM679.40 486.24h3.95v-12.68h-3.95zM684.08 486.24h3.95v-8.46h-3.95zM688.76 490.47h3.95v-4.23h-3.95zM693.44 507.38h3.95v-8.46h-3.95zM698.12 490.47h3.95v-4.23h-3.95zM702.80 482.02h3.95v-8.46h-3.95zM707.48 482.02h3.95v-4.23h-3.95zM712.16 503.15h3.95v-12.68h-3.95zM721.52 490.47h3.95v-8.46h-3.95zM726.20 494.70h3.95v-4.23h-3.95zM730.88 498.93h3.95v-4.23h-3.95zM735.56 477.79h3.95v-8.46h-3.95zM740.24 503.15h3.95v-4.23h-3.95zM744.92 469.33h3.95v-4.23h-3.95zM749.60 498.93h3.95v-8.46h-3.95zM754.28 490.47h3.95v-8.46h-3.95zM758.96 494.70h3.95v-4.23h-3.95zM763.64 490.47h3.95v-4.23h-3.95zM768.32 490.47h3.95v-8.46h-3.95zM773.00 486.24h3.95v-4.23h-3.95zM777.68 511.61h3.95v-4.23h-3.95zM782.36 507.38h3.95v-4.23h-3.95zM787.04 498.93h3.95v-8.46h-3.95zM791.72 477.79h3.95v-12.68h-3.95zM796.40 494.70h3.95v-8.46h-3.95zM801.08 494.70h3.95v-8.46h-3.95zM805.76 482.02h3.95v-8.46h-3.95zM810.44 515.84h3.95v-4.23h-3.95zM819.80 486.24h3.95v-8.46h-3.95zM824.48 528.52h3.95v-4.23h-3.95zM829.16 494.70h3.95v-4.23h-3.95zM833.84 507.38h3.95v-4.23h-3.95zM838.52 486.24h3.95v-8.46h-3.95zM852.56 503.15h3.95v-4.23h-3.95zM857.24 503.15h3.95v-4.23h-3.95zM861.92 494.70h3.95v-8.46h-3.95zM866.60 498.92h3.95v-12.68h-3.95zM871.28 490.47h3.95v-4.23h-3.95zM875.96 503.15h3.95v-8.46h-3.95zM880.64 482.02h3.95v-4.23h-3.95zM885.32 482.01h3.95v-8.46h-3.95zM890.00 507.38h3.95v-4.23h-3.95zM899.36 507.38h3.95v-8.46h-3.95zM904.04 511.61h3.95v-4.23h-3.95zM908.72 486.24h3.95v-8.46h-3.95zM913.40 498.93h3.95v-4.23h-3.95zM918.08 503.15h3.95v-8.46h-3.95zM922.76 507.38h3.95v-4.23h-3.95zM927.44 490.47h3.95v-4.23h-3.95zM932.12 494.70h3.95v-8.46h-3.95zM936.80 477.79h3.95v-8.46h-3.95zM941.48 486.24h3.95v-8.46h-3.95zM950.84 473.56h3.95v-12.68h-3.95zM955.52 498.93h3.95v-4.23h-3.95zM960.20 490.47h3.95v-8.46h-3.95zM964.88 490.47h3.95v-8.46h-3.95zM969.56 498.93h3.95v-8.46h-3.95zM974.24 503.15h3.95v-8.46h-3.95zM978.92 490.47h3.95v-8.46h-3.95zM983.60 511.61h3.95v-4.23h-3.95zM988.28 494.70h3.95v-4.23h-3.95zM992.96 494.70h3.95v-12.68h-3.95zM997.64 498.93h3.95v-4.23h-3.95z" fill="#2fcaa2"/><path d="M609.20 477.79h3.95v-4.23h-3.95zM609.20 456.65h3.95v-4.23h-3.95zM613.88 486.24h3.95v-8.46h-3.95zM613.88 469.33h3.95v-12.68h-3.95zM618.56 494.70h3.95v-8.46h-3.95zM618.56 473.56h3.95v-8.46h-3.95zM623.24 473.56h3.95v-4.23h-3.95zM623.24 456.65h3.95v-4.23h-3.95zM627.92 477.79h3.95v-8.46h-3.95zM627.92 452.42h3.95v-8.46h-3.95zM632.60 460.88h3.95v-12.68h-3.95zM632.60 427.06h3.95v-4.23h-3.95zM637.28 494.70h3.95v-4.23h-3.95zM637.28 482.01h3.95v-4.23h-3.95zM641.96 486.24h3.95v-8.46h-3.95zM641.96 465.11h3.95v-4.23h-3.95zM646.64 482.01h3.95v-8.46h-3.95zM646.64 460.88h3.95v-12.68h-3.95zM651.32 494.70h3.95v-8.46h-3.95zM651.32 469.33h3.95v-8.46h-3.95zM656.00 473.56h3.95v-8.46h-3.95zM656.00 452.42h3.95v-4.23h-3.95zM660.68 498.92h3.95v-12.68h-3.95zM660.68 477.79h3.95v-4.23h-3.95zM665.36 486.24h3.95v-8.46h-3.95zM665.36 465.10h3.95v-8.46h-3.95zM670.04 473.56h3.95v-8.46h-3.95zM670.04 452.42h3.95v-4.23h-3.95zM674.72 477.79h3.95v-4.23h-3.95zM674.72 452.42h3.95v-8.46h-3.95zM679.40 473.56h3.95v-8.46h-3.95zM679.40 452.42h3.95v-4.23h-3.95zM684.08 477.79h3.95v-4.23h-3.95zM684.08 460.88h3.95v-8.46h-3.95zM688.76 486.24h3.95v-4.23h-3.95zM688.76 465.10h3.95v-8.46h-3.95zM693.44 498.93h3.95v-8.46h-3.95zM693.44 473.56h3.95v-4.23h-3.95zM698.12 486.24h3.95v-4.23h-3.95zM698.12 465.11h3.95v-4.23h-3.95zM702.80 473.56h3.95v-8.46h-3.95zM702.80 448.20h3.95v-8.46h-3.95zM707.48 477.79h3.95v-4.23h-3.95zM707.48 452.42h3.95v-12.68h-3.95zM712.16 490.47h3.95v-8.46h-3.95zM712.16 473.56h3.95v-4.23h-3.95zM716.84 469.33h3.95v-8.46h-3.95zM721.52 482.02h3.95v-8.46h-3.95zM721.52 465.11h3.95v-4.23h-3.95zM726.20 490.47h3.95v-8.46h-3.95zM726.20 473.56h3.95v-8.46h-3.95zM730.88 494.70h3.95v-8.46h-3.95zM730.88 469.33h3.95v-8.46h-3.95zM735.56 469.33h3.95v-8.46h-3.95zM740.24 498.93h3.95v-8.46h-3.95zM740.24 486.24h3.95v-8.46h-3.95zM744.92 465.11h3.95v-8.46h-3.95zM744.92 448.20h3.95v-8.46h-3.95zM749.60 490.47h3.95v-8.46h-3.95zM749.60 473.56h3.95v-4.23h-3.95zM754.28 482.02h3.95v-4.23h-3.95zM754.28 465.11h3.95v-8.46h-3.95zM758.96 482.02h3.95v-8.46h-3.95zM763.64 486.24h3.95v-4.23h-3.95zM763.64 473.56h3.95v-8.46h-3.95zM768.32 482.01h3.95v-8.46h-3.95zM773.00 482.01h3.95v-8.46h-3.95zM773.00 460.88h3.95v-8.46h-3.95zM777.68 507.38h3.95v-4.23h-3.95zM777.68 498.93h3.95v-4.23h-3.95zM782.36 503.15h3.95v-4.23h-3.95zM782.36 482.02h3.95v-8.46h-3.95zM787.04 490.47h3.95v-8.46h-3.95zM791.72 465.11h3.95v-4.23h-3.95zM791.72 435.51h3.95v-12.68h-3.95zM796.40 473.56h3.95v-4.23h-3.95zM801.08 486.24h3.95v-8.46h-3.95zM801.08 452.42h3.95v-4.23h-3.95zM805.76 473.56h3.95v-8.46h-3.95zM805.76 456.65h3.95v-8.46h-3.95zM810.44 511.61h3.95v-8.46h-3.95zM810.44 490.47h3.95v-8.46h-3.95zM815.12 503.15h3.95v-16.91h-3.95zM815.12 473.56h3.95v-8.46h-3.95zM819.80 477.79h3.95v-8.46h-3.95zM819.80 448.20h3.95v-12.68h-3.95zM824.48 524.29h3.95v-4.23h-3.95zM824.48 515.84h3.95v-4.23h-3.95zM829.16 490.47h3.95v-8.46h-3.95zM829.16 465.10h3.95v-4.23h-3.95zM833.84 503.15h3.95v-8.46h-3.95zM833.84 482.02h3.95v-4.23h-3.95zM838.52 477.79h3.95v-16.91h-3.95zM843.20 503.15h3.95v-4.23h-3.95zM843.20 482.01h3.95v-12.68h-3.95zM847.88 498.92h3.95v-8.46h-3.95zM847.88 465.10h3.95v-8.46h-3.95zM852.56 498.92h3.95v-4.23h-3.95zM852.56 482.01h3.95v-12.68h-3.95zM857.24 498.93h3.95v-4.23h-3.95zM857.24 486.24h3.95v-8.46h-3.95zM861.92 473.56h3.95v-4.23h-3.95zM866.60 486.24h3.95v-12.68h-3.95zM866.60 452.42h3.95v-4.23h-3.95zM871.28 486.24h3.95v-8.46h-3.95zM871.28 460.88h3.95v-4.23h-3.95zM875.96 494.70h3.95v-8.46h-3.95zM875.96 469.33h3.95v-8.46h-3.95zM880.64 477.79h3.95v-4.23h-3.95zM880.64 460.88h3.95v-8.46h-3.95zM885.32 460.88h3.95v-4.23h-3.95zM890.00 503.15h3.95v-4.23h-3.95zM890.00 490.47h3.95v-8.46h-3.95zM894.68 486.24h3.95v-4.23h-3.95zM894.68 460.88h3.95v-8.46h-3.95zM899.36 498.93h3.95v-4.23h-3.95zM899.36 486.24h3.95v-4.23h-3.95zM904.04 507.38h3.95v-4.23h-3.95zM904.04 486.24h3.95v-8.46h-3.95zM908.72 477.79h3.95v-4.23h-3.95zM913.40 494.70h3.95v-4.23h-3.95zM913.40 482.02h3.95v-4.23h-3.95zM918.08 477.79h3.95v-4.23h-3.95zM922.76 503.15h3.95v-4.23h-3.95zM922.76 486.24h3.95v-4.23h-3.95zM927.44 486.24h3.95v-8.46h-3.95zM927.44 460.88h3.95v-4.23h-3.95zM932.12 486.24h3.95v-4.23h-3.95zM932.12 473.56h3.95v-4.23h-3.95zM936.80 469.33h3.95v-8.46h-3.95zM936.80 448.19h3.95v-4.23h-3.95zM941.48 477.79h3.95v-8.46h-3.95zM941.48 460.88h3.95v-4.23h-3.95zM946.16 490.47h3.95v-8.46h-3.95zM946.16 460.88h3.95v-12.68h-3.95zM950.84 460.88h3.95v-12.68h-3.95zM950.84 427.06h3.95v-8.46h-3.95zM955.52 494.70h3.95v-8.46h-3.95zM955.52 469.33h3.95v-4.23h-3.95zM960.20 482.02h3.95v-4.23h-3.95zM960.20 460.88h3.95v-8.46h-3.95zM964.88 482.02h3.95v-8.46h-3.95zM964.88 456.65h3.95v-4.23h-3.95zM969.56 490.47h3.95v-4.23h-3.95zM974.24 494.70h3.95v-4.23h-3.95zM974.24 477.79h3.95v-8.46h-3.95zM978.92 482.02h3.95v-12.68h-3.95zM978.92 452.42h3.95v-4.23h-3.95zM983.60 498.93h3.95v-4.23h-3.95zM988.28 490.47h3.95v-4.23h-3.95zM988.28 473.56h3.95v-8.46h-3.95zM992.96 482.02h3.95v-8.46h-3.95zM992.96 465.11h3.95v-4.23h-3.95zM997.64 494.70h3.95v-4.23h-3.95zM997.64 482.02h3.95v-4.23h-3.95z" fill="#ef4b93"/><path d="M609.20 473.56h3.95v-8.46h-3.95zM613.88 477.79h3.95v-8.46h-3.95zM618.56 486.24h3.95v-4.23h-3.95zM623.24 469.33h3.95v-4.23h-3.95zM627.92 469.33h3.95v-8.46h-3.95zM632.60 448.19h3.95v-12.68h-3.95zM637.28 490.47h3.95v-4.23h-3.95zM641.96 477.79h3.95v-4.23h-3.95zM651.32 486.24h3.95v-8.46h-3.95zM660.68 486.24h3.95v-4.23h-3.95zM665.36 477.79h3.95v-8.46h-3.95zM670.04 465.11h3.95v-8.46h-3.95zM674.72 473.56h3.95v-12.68h-3.95zM679.40 465.10h3.95v-8.46h-3.95zM684.08 473.56h3.95v-8.46h-3.95zM688.76 482.01h3.95v-8.46h-3.95zM693.44 490.47h3.95v-12.68h-3.95zM698.12 482.01h3.95v-8.46h-3.95zM702.80 465.11h3.95v-8.46h-3.95zM707.48 473.56h3.95v-8.46h-3.95zM716.84 486.24h3.95v-4.23h-3.95zM721.52 473.56h3.95v-4.23h-3.95zM726.20 482.01h3.95v-4.23h-3.95zM730.88 486.24h3.95v-8.46h-3.95zM735.56 460.88h3.95v-8.46h-3.95zM749.60 482.02h3.95v-4.23h-3.95zM754.28 477.79h3.95v-4.23h-3.95zM763.64 482.01h3.95v-4.23h-3.95zM768.32 473.56h3.95v-8.46h-3.95zM773.00 473.56h3.95v-4.23h-3.95zM777.68 503.15h3.95v-4.23h-3.95zM782.36 498.93h3.95v-8.46h-3.95zM787.04 482.02h3.95v-8.46h-3.95zM791.72 460.88h3.95v-12.68h-3.95zM796.40 486.24h3.95v-4.23h-3.95zM801.08 477.79h3.95v-12.68h-3.95zM805.76 465.11h3.95v-4.23h-3.95zM810.44 503.15h3.95v-4.23h-3.95zM815.12 486.24h3.95v-4.23h-3.95zM819.80 469.33h3.95v-12.68h-3.95zM824.48 520.06h3.95v-4.23h-3.95zM829.16 482.01h3.95v-8.46h-3.95zM833.84 494.70h3.95v-8.46h-3.95zM838.52 460.88h3.95v-8.46h-3.95zM843.20 498.92h3.95v-12.68h-3.95zM847.88 490.47h3.95v-12.68h-3.95zM852.56 494.70h3.95v-8.46h-3.95zM861.92 486.24h3.95v-4.23h-3.95zM866.60 473.56h3.95v-12.68h-3.95zM871.28 477.79h3.95v-8.46h-3.95zM875.96 486.24h3.95v-8.46h-3.95zM885.32 473.56h3.95v-8.46h-3.95zM894.68 482.01h3.95v-12.68h-3.95zM899.36 494.70h3.95v-4.23h-3.95zM904.04 503.15h3.95v-8.46h-3.95zM908.72 473.56h3.95v-4.23h-3.95zM913.40 490.47h3.95v-4.23h-3.95zM918.08 494.70h3.95v-8.46h-3.95zM922.76 498.93h3.95v-4.23h-3.95zM927.44 477.79h3.95v-8.46h-3.95zM932.12 482.01h3.95v-4.23h-3.95zM936.80 460.88h3.95v-8.46h-3.95zM941.48 469.33h3.95v-8.46h-3.95zM946.16 482.02h3.95v-8.46h-3.95zM950.84 448.20h3.95v-12.68h-3.95zM955.52 486.24h3.95v-8.46h-3.95zM960.20 477.79h3.95v-4.23h-3.95zM964.88 473.56h3.95v-8.46h-3.95zM969.56 486.24h3.95v-4.23h-3.95zM974.24 490.47h3.95v-8.46h-3.95zM978.92 469.33h3.95v-8.46h-3.95zM983.60 507.38h3.95v-4.23h-3.95zM988.28 486.24h3.95v-4.23h-3.95zM992.96 473.56h3.95v-4.23h-3.95zM997.64 490.47h3.95v-4.23h-3.95z" fill="#dd9deb"/><path d="M609.20 465.11h3.95v-8.46h-3.95zM618.56 482.02h3.95v-8.46h-3.95zM623.24 465.10h3.95v-8.46h-3.95zM627.92 460.88h3.95v-8.46h-3.95zM632.60 435.51h3.95v-8.46h-3.95zM637.28 486.24h3.95v-4.23h-3.95zM641.96 473.56h3.95v-8.46h-3.95zM646.64 473.56h3.95v-12.68h-3.95zM651.32 477.79h3.95v-8.46h-3.95zM656.00 465.11h3.95v-12.68h-3.95zM660.68 482.01h3.95v-4.23h-3.95zM665.36 469.33h3.95v-4.23h-3.95zM670.04 456.65h3.95v-4.23h-3.95zM674.72 460.88h3.95v-8.46h-3.95zM679.40 456.65h3.95v-4.23h-3.95zM684.08 465.10h3.95v-4.23h-3.95zM688.76 473.56h3.95v-8.46h-3.95zM693.44 477.79h3.95v-4.23h-3.95zM698.12 473.56h3.95v-8.46h-3.95zM702.80 456.65h3.95v-8.46h-3.95zM707.48 465.11h3.95v-12.68h-3.95zM712.16 482.02h3.95v-8.46h-3.95zM716.84 482.01h3.95v-12.68h-3.95zM721.52 469.33h3.95v-4.23h-3.95zM726.20 477.79h3.95v-4.23h-3.95zM730.88 477.79h3.95v-8.46h-3.95zM740.24 490.47h3.95v-4.23h-3.95zM744.92 456.65h3.95v-8.46h-3.95zM749.60 477.79h3.95v-4.23h-3.95zM754.28 473.56h3.95v-8.46h-3.95zM758.96 490.47h3.95v-8.46h-3.95zM763.64 477.79h3.95v-4.23h-3.95zM768.32 465.10h3.95v-4.23h-3.95zM773.00 469.33h3.95v-8.46h-3.95zM782.36 490.47h3.95v-8.46h-3.95zM787.04 473.56h3.95v-8.46h-3.95zM791.72 448.19h3.95v-12.68h-3.95zM796.40 482.01h3.95v-8.46h-3.95zM801.08 465.11h3.95v-12.68h-3.95zM805.76 460.88h3.95v-4.23h-3.95zM810.44 498.93h3.95v-8.46h-3.95zM815.12 482.01h3.95v-8.46h-3.95zM819.80 456.65h3.95v-8.46h-3.95zM829.16 473.56h3.95v-8.46h-3.95zM833.84 486.24h3.95v-4.23h-3.95zM838.52 452.42h3.95v-4.23h-3.95zM843.20 486.24h3.95v-4.23h-3.95zM847.88 477.79h3.95v-12.68h-3.95zM852.56 486.24h3.95v-4.23h-3.95zM857.24 494.70h3.95v-8.46h-3.95zM861.92 482.02h3.95v-8.46h-3.95zM866.60 460.88h3.95v-8.46h-3.95zM871.28 469.33h3.95v-8.46h-3.95zM875.96 477.79h3.95v-8.46h-3.95zM880.64 473.56h3.95v-12.68h-3.95zM885.32 465.11h3.95v-4.23h-3.95zM890.00 498.92h3.95v-8.46h-3.95zM894.68 469.33h3.95v-8.46h-3.95zM899.36 490.47h3.95v-4.23h-3.95zM904.04 494.70h3.95v-8.46h-3.95zM908.72 469.33h3.95v-4.23h-3.95zM913.40 486.24h3.95v-4.23h-3.95zM918.08 486.24h3.95v-8.46h-3.95zM922.76 494.70h3.95v-8.46h-3.95zM927.44 469.33h3.95v-8.46h-3.95zM932.12 477.79h3.95v-4.23h-3.95zM936.80 452.42h3.95v-4.23h-3.95zM946.16 473.56h3.95v-12.68h-3.95zM950.84 435.51h3.95v-8.46h-3.95zM955.52 477.79h3.95v-8.46h-3.95zM960.20 473.56h3.95v-12.68h-3.95zM964.88 465.11h3.95v-8.46h-3.95zM969.56 482.01h3.95v-8.46h-3.95zM974.24 482.02h3.95v-4.23h-3.95zM978.92 460.88h3.95v-8.46h-3.95zM983.60 503.15h3.95v-4.23h-3.95zM988.28 482.01h3.95v-8.46h-3.95zM992.96 469.33h3.95v-4.23h-3.95zM997.64 486.24h3.95v-4.23h-3.95z" fill="#7f80ee"/><path d="M609.20 452.42h3.95v-8.46h-3.95zM613.88 456.65h3.95v-8.46h-3.95zM618.56 465.11h3.95v-12.68h-3.95zM623.24 452.42h3.95v-8.46h-3.95zM627.92 443.97h3.95v-8.46h-3.95zM637.28 477.79h3.95v-8.46h-3.95zM641.96 460.88h3.95v-4.23h-3.95zM651.32 460.88h3.95v-4.23h-3.95zM656.00 448.19h3.95v-8.46h-3.95zM660.68 473.56h3.95v-4.23h-3.95zM665.36 456.65h3.95v-12.68h-3.95zM670.04 448.20h3.95v-8.46h-3.95zM674.72 443.97h3.95v-8.46h-3.95zM679.40 448.19h3.95v-8.46h-3.95zM688.76 456.65h3.95v-4.23h-3.95zM693.44 469.33h3.95v-8.46h-3.95zM698.12 460.88h3.95v-8.46h-3.95zM702.80 439.74h3.95v-8.46h-3.95zM707.48 439.74h3.95v-12.68h-3.95zM712.16 469.33h3.95v-4.23h-3.95zM716.84 460.88h3.95v-4.23h-3.95zM721.52 460.88h3.95v-8.46h-3.95zM726.20 465.10h3.95v-4.23h-3.95zM730.88 460.88h3.95v-8.46h-3.95zM735.56 452.42h3.95v-8.46h-3.95zM740.24 477.79h3.95v-8.46h-3.95zM744.92 439.74h3.95v-8.46h-3.95zM749.60 469.33h3.95v-4.23h-3.95zM754.28 456.65h3.95v-4.23h-3.95zM758.96 473.56h3.95v-8.46h-3.95zM763.64 465.10h3.95v-4.23h-3.95zM777.68 494.70h3.95v-4.23h-3.95zM782.36 473.56h3.95v-4.23h-3.95zM791.72 422.83h3.95v-4.23h-3.95zM796.40 469.33h3.95v-8.46h-3.95zM801.08 448.19h3.95v-4.23h-3.95zM805.76 448.20h3.95v-8.46h-3.95zM810.44 482.02h3.95v-8.46h-3.95zM815.12 465.11h3.95v-4.23h-3.95zM819.80 435.51h3.95v-4.23h-3.95zM824.48 511.61h3.95v-4.23h-3.95zM829.16 460.88h3.95v-12.68h-3.95zM833.84 477.79h3.95v-4.23h-3.95zM838.52 448.20h3.95v-8.46h-3.95zM843.20 469.33h3.95v-8.46h-3.95zM847.88 456.65h3.95v-8.46h-3.95zM852.56 469.33h3.95v-4.23h-3.95zM857.24 477.79h3.95v-4.23h-3.95zM861.92 469.33h3.95v-12.68h-3.95zM866.60 448.19h3.95v-8.46h-3.95zM871.28 456.65h3.95v-8.46h-3.95zM875.96 460.88h3.95v-8.46h-3.95zM885.32 456.65h3.95v-4.23h-3.95zM890.00 482.01h3.95v-8.46h-3.95zM894.68 452.42h3.95v-8.46h-3.95zM904.04 477.79h3.95v-8.46h-3.95zM908.72 465.10h3.95v-8.46h-3.95zM913.40 477.79h3.95v-8.46h-3.95zM918.08 473.56h3.95v-8.46h-3.95zM922.76 482.02h3.95v-4.23h-3.95zM927.44 456.65h3.95v-4.23h-3.95zM932.12 469.33h3.95v-8.46h-3.95zM936.80 443.97h3.95v-12.68h-3.95zM941.48 456.65h3.95v-4.23h-3.95zM946.16 448.20h3.95v-8.46h-3.95zM950.84 418.60h3.95v-8.46h-3.95zM955.52 465.11h3.95v-4.23h-3.95zM960.20 452.42h3.95v-12.68h-3.95zM964.88 452.42h3.95v-8.46h-3.95zM969.56 473.56h3.95v-4.23h-3.95zM974.24 469.33h3.95v-8.46h-3.95zM978.92 448.20h3.95v-8.46h-3.95zM983.60 494.70h3.95v-4.23h-3.95zM988.28 465.10h3.95v-4.23h-3.95zM992.96 460.88h3.95v-8.46h-3.95zM997.64 477.79h3.95v-4.23h-3.95z" fill="#00c8fb"/><path d="M609.20 431.29h3.95v-8.46h-3.95zM613.88 439.74h3.95v-8.46h-3.95zM618.56 443.97h3.95v-8.46h-3.95zM623.24 439.74h3.95v-4.23h-3.95zM627.92 418.60h3.95v-12.68h-3.95zM632.60 414.38h3.95v-12.68h-3.95zM637.28 465.10h3.95v-4.23h-3.95zM641.96 448.20h3.95v-8.46h-3.95zM651.32 452.42h3.95v-4.23h-3.95zM656.00 427.06h3.95v-4.23h-3.95zM660.68 460.88h3.95v-4.23h-3.95zM665.36 443.97h3.95v-8.46h-3.95zM670.04 435.51h3.95v-8.46h-3.95zM674.72 435.51h3.95v-8.46h-3.95zM679.40 431.28h3.95v-4.23h-3.95zM684.08 448.19h3.95v-4.23h-3.95zM688.76 448.19h3.95v-8.46h-3.95zM693.44 452.42h3.95v-4.23h-3.95zM698.12 448.19h3.95v-8.46h-3.95zM702.80 422.83h3.95v-8.46h-3.95zM707.48 418.60h3.95v-12.68h-3.95zM712.16 452.42h3.95v-8.46h-3.95zM716.84 452.42h3.95v-8.46h-3.95zM721.52 443.97h3.95v-8.46h-3.95zM726.20 452.42h3.95v-8.46h-3.95zM730.88 443.97h3.95v-4.23h-3.95zM735.56 435.51h3.95v-8.46h-3.95zM740.24 465.11h3.95v-4.23h-3.95zM744.92 418.60h3.95v-8.46h-3.95zM749.60 456.65h3.95v-4.23h-3.95zM758.96 460.88h3.95v-4.23h-3.95zM768.32 452.42h3.95v-8.46h-3.95zM773.00 443.97h3.95v-4.23h-3.95zM782.36 465.11h3.95v-4.23h-3.95zM787.04 456.65h3.95v-8.46h-3.95zM791.72 418.60h3.95v-4.23h-3.95zM796.40 460.88h3.95v-8.46h-3.95zM801.08 439.74h3.95v-8.46h-3.95zM805.76 431.29h3.95v-8.46h-3.95zM810.44 465.11h3.95v-12.68h-3.95zM815.12 452.42h3.95v-8.46h-3.95zM819.80 422.83h3.95v-12.68h-3.95zM824.48 503.15h3.95v-4.23h-3.95zM829.16 439.74h3.95v-4.23h-3.95zM833.84 465.11h3.95v-4.23h-3.95zM838.52 435.51h3.95v-4.23h-3.95zM843.20 452.42h3.95v-8.46h-3.95zM847.88 448.19h3.95v-8.46h-3.95zM852.56 456.65h3.95v-4.23h-3.95zM857.24 469.33h3.95v-8.46h-3.95zM861.92 448.20h3.95v-8.46h-3.95zM866.60 431.28h3.95v-12.68h-3.95zM871.28 443.97h3.95v-4.23h-3.95zM880.64 443.97h3.95v-12.68h-3.95zM885.32 448.19h3.95v-4.23h-3.95zM890.00 469.33h3.95v-4.23h-3.95zM894.68 443.97h3.95v-12.68h-3.95zM899.36 473.56h3.95v-8.46h-3.95zM904.04 469.33h3.95v-8.46h-3.95zM913.40 465.11h3.95v-4.23h-3.95zM918.08 456.65h3.95v-8.46h-3.95zM922.76 469.33h3.95v-8.46h-3.95zM927.44 448.19h3.95v-8.46h-3.95zM932.12 452.42h3.95v-4.23h-3.95zM936.80 422.83h3.95v-8.46h-3.95zM941.48 448.19h3.95v-8.46h-3.95zM946.16 431.29h3.95v-12.68h-3.95zM955.52 448.19h3.95v-4.23h-3.95zM960.20 427.06h3.95v-4.23h-3.95zM964.88 439.74h3.95v-4.23h-3.95zM969.56 465.10h3.95v-4.23h-3.95zM974.24 456.65h3.95v-8.46h-3.95zM978.92 431.29h3.95v-8.46h-3.95zM983.60 486.24h3.95v-4.23h-3.95zM988.28 456.65h3.95v-4.23h-3.95zM992.96 439.74h3.95v-4.23h-3.95zM997.64 465.11h3.95v-4.23h-3.95z" fill="#a88ce0"/><path d="M628.2 541.500v2.800" stroke="#9aa3b0" stroke-width="1"/><path d="M684.4 541.500v2.800" stroke="#9aa3b0" stroke-width="1"/><path d="M740.5 541.500v2.800" stroke="#9aa3b0" stroke-width="1"/><path d="M796.7 541.500v2.800" stroke="#9aa3b0" stroke-width="1"/><path d="M852.8 541.500v2.800" stroke="#9aa3b0" stroke-width="1"/><path d="M909.0 541.500v2.800" stroke="#9aa3b0" stroke-width="1"/><path d="M965.2 541.500v2.800" stroke="#9aa3b0" stroke-width="1"/></svg>
<div class="t" style="left:618.05px;top:544.10px;font-size:7.8px;line-height:11px;color:#3d4858;letter-spacing:-0.375px;">Sat 10</div>
<div class="t" style="left:673.11px;top:544.10px;font-size:7.8px;line-height:11px;color:#3d4858;letter-spacing:-0.417px;">May 11</div>
<div class="t" style="left:728.92px;top:544.10px;font-size:7.8px;line-height:11px;color:#3d4858;letter-spacing:-0.470px;">Mon 12</div>
<div class="t" style="left:786.28px;top:544.10px;font-size:7.8px;line-height:11px;color:#3d4858;letter-spacing:-0.533px;">Tue 13</div>
<div class="t" style="left:841.09px;top:544.10px;font-size:7.8px;line-height:11px;color:#3d4858;letter-spacing:-0.540px;">Wed 14</div>
<div class="t" style="left:898.40px;top:544.10px;font-size:7.8px;line-height:11px;color:#3d4858;letter-spacing:-0.514px;">Thu 15</div>
<div class="t" style="left:956.01px;top:544.10px;font-size:7.8px;line-height:11px;color:#3d4858;letter-spacing:-0.273px;">Fri 16</div>
<div class="t" style="left:602.80px;top:535.50px;font-size:7.8px;line-height:11px;color:#3d4858;letter-spacing:-0.138px;">0</div>
<div class="t" style="left:602.80px;top:514.36px;font-size:7.8px;line-height:11px;color:#3d4858;letter-spacing:-0.138px;">5</div>
<div class="t" style="left:598.70px;top:493.23px;font-size:7.8px;line-height:11px;color:#3d4858;letter-spacing:-0.188px;">10</div>
<div class="t" style="left:598.70px;top:472.09px;font-size:7.8px;line-height:11px;color:#3d4858;letter-spacing:-0.188px;">15</div>
<div class="t" style="left:598.70px;top:450.95px;font-size:7.8px;line-height:11px;color:#3d4858;letter-spacing:-0.188px;">20</div>
<div class="t" style="left:598.70px;top:429.81px;font-size:7.8px;line-height:11px;color:#3d4858;letter-spacing:-0.188px;">25</div>
<div class="t" style="left:598.70px;top:408.68px;font-size:7.8px;line-height:11px;color:#3d4858;letter-spacing:-0.188px;">30</div>
<div class="t" style="left:598.70px;top:387.54px;font-size:7.8px;line-height:11px;color:#3d4858;letter-spacing:-0.188px;">35</div>
<div class="t" style="left:598.70px;top:366.40px;font-size:7.8px;line-height:11px;color:#3d4858;letter-spacing:-0.188px;">40</div>
<div class="b" style="left:602.60px;top:564.90px;width:7.70px;height:7.60px;background:#fdba2e;border-radius:1px;"></div>
<div class="t" style="left:614.50px;top:562.50px;font-size:9px;line-height:13px;color:#3d4858;letter-spacing:-0.509px;">Travel Recommendations</div>
<div class="b" style="left:716.60px;top:564.90px;width:7.70px;height:7.60px;background:#8784ee;border-radius:1px;"></div>
<div class="t" style="left:728.50px;top:562.50px;font-size:9px;line-height:13px;color:#3d4858;letter-spacing:-0.443px;">Fun Conversations</div>
<div class="b" style="left:807.10px;top:564.90px;width:7.70px;height:7.60px;background:#84d552;border-radius:1px;"></div>
<div class="t" style="left:819.00px;top:562.50px;font-size:9px;line-height:13px;color:#3d4858;letter-spacing:-0.532px;">Claude Comparison</div>
<div class="b" style="left:900.60px;top:564.90px;width:7.70px;height:7.60px;background:#559bfa;border-radius:1px;"></div>
<div class="t" style="left:912.50px;top:562.50px;font-size:9px;line-height:13px;color:#3d4858;letter-spacing:-0.396px;">Claude Version</div>
<div class="b" style="left:946.00px;top:560.00px;width:18.00px;height:15.00px;background:linear-gradient(90deg,rgba(255,255,255,0),#fff);"></div>
<div class="b" style="left:964.00px;top:560.00px;width:47.00px;height:15.00px;background:#fff;"></div>
<div class="b" style="left:964.30px;top:561.40px;width:22.10px;height:13.30px;border:1px solid #d3d9e4;border-radius:3px;background:#fff;box-sizing:border-box;"></div>
<div class="t" style="left:969.30px;top:562.10px;font-size:8.6px;line-height:12px;color:#3d4858;letter-spacing:-0.417px;">+11</div>
</div></body></html>
